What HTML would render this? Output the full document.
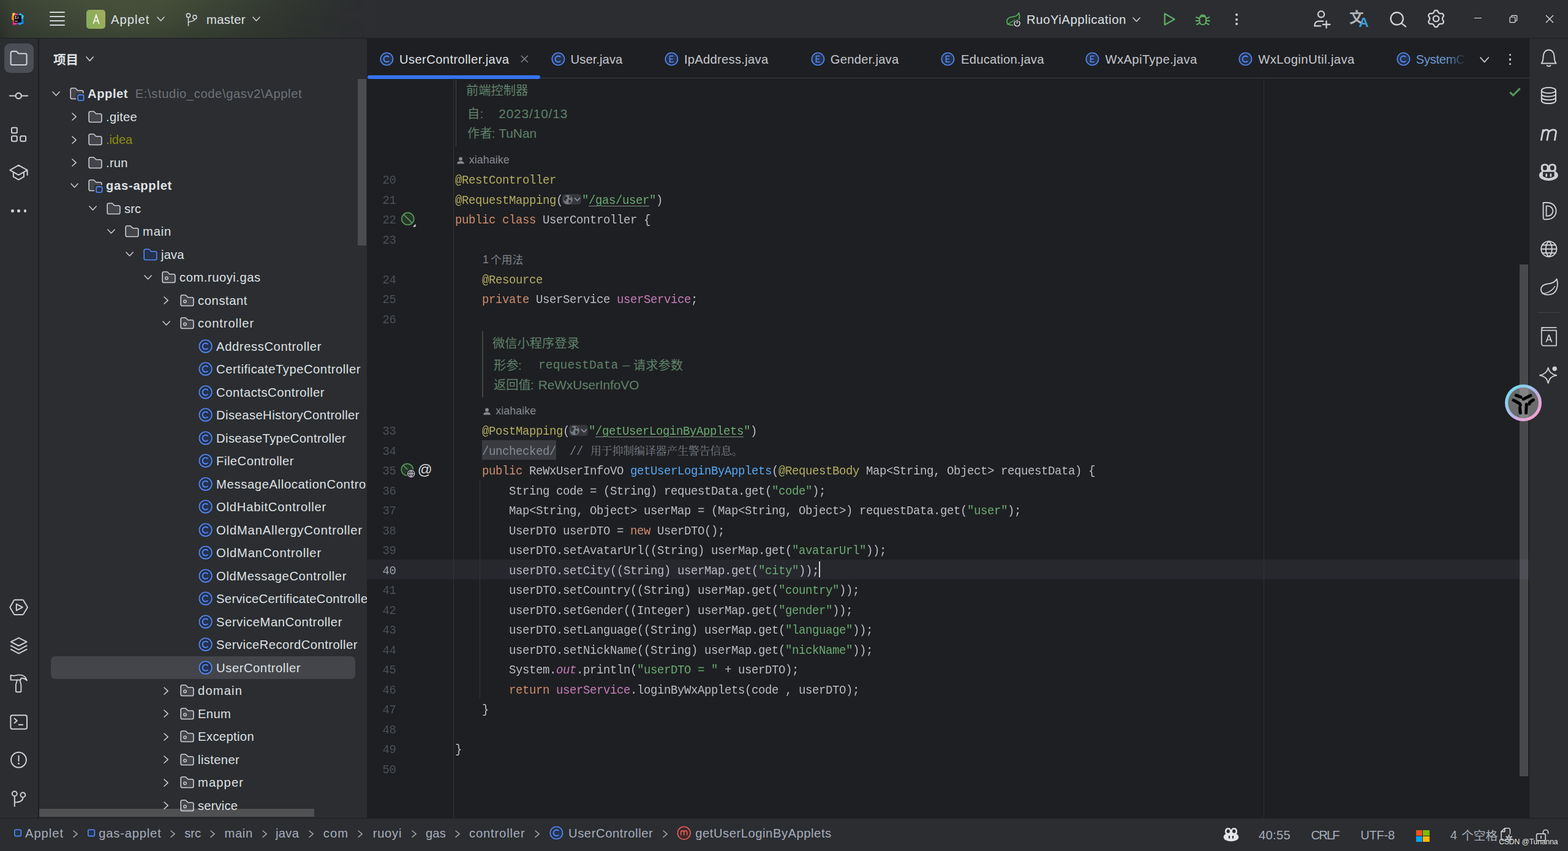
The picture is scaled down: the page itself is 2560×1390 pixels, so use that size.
<!DOCTYPE html>
<html><head><meta charset="utf-8"><title>UserController.java</title>
<style>html,body{margin:0;padding:0;background:#2b2d30;}body{width:2560px;height:1390px;overflow:hidden;position:relative;font-family:"Liberation Sans",sans-serif;}.r,.t,.i,.cj{position:absolute;display:block;}.t{white-space:pre;}.m{font-family:"Liberation Mono",monospace;}.c{transform:scaleY(1.045);transform-origin:0 17.55px;}.i,.cj{overflow:visible;}.cj text{font-family:"Liberation Sans","Noto Sans CJK SC",sans-serif;}</style></head>
<body>
<div class="r" style="left:0.00px;top:0.00px;width:2560.00px;height:1390.00px;background:#2b2d30;"></div>
<div class="r" style="left:0;top:0;width:2560px;height:62px;background:linear-gradient(90deg,#30362f 0px,#383f34 18px,#3d4637 70px,#424b39 140px,#454e3a 200px,#424b38 270px,#3b4335 340px,#343a31 420px,#2f3330 500px,#2c2e30 570px,#2b2d30 620px,#2b2d30 100%);"></div>
<div class="r" style="left:0;top:0;width:600px;height:62px;background:linear-gradient(180deg,rgba(90,105,60,0.10) 0%,rgba(0,0,0,0) 40%,rgba(22,24,26,0.20) 100%);-webkit-mask-image:linear-gradient(90deg,#000 0,#000 55%,transparent 100%);mask-image:linear-gradient(90deg,#000 0,#000 55%,transparent 100%);"></div>
<div class="r" style="left:0.00px;top:62.00px;width:2560.00px;height:1.10px;background:#1e1f22;"></div>
<div class="r" style="left:599.40px;top:63.00px;width:1897.60px;height:1273.50px;background:#1e1f22;"></div>
<div class="r" style="left:62.30px;top:62.00px;width:1.50px;height:1275.00px;background:#1e1f22;"></div>
<div class="r" style="left:598.60px;top:62.00px;width:1.00px;height:1275.00px;background:#1e1f22;"></div>
<div class="r" style="left:2497.00px;top:62.50px;width:63.00px;height:1274.00px;background:#2b2d30;"></div>
<div class="r" style="left:2496.00px;top:62.00px;width:1.00px;height:1275.00px;background:#1e1f22;"></div>
<div class="r" style="left:0.00px;top:1336.00px;width:2560.00px;height:54.00px;background:#2b2d30;"></div>
<div class="r" style="left:0.00px;top:1336.00px;width:2560.00px;height:1.00px;background:#1e1f22;"></div>
<svg class="i" style="left:18.00px;top:20.00px;" width="23" height="22" viewBox="0 0 23 22"><polygon points="2.5,1.5 10,1.8 12,5 5,5 5,16.7 10,17.5 9,20.5 2.7,20.6 3,13 1.2,11 2.3,7" fill="#fc2d8e"/><polygon points="1.3,6.2 5,5 5,14 1.2,12" fill="#fd8a1f"/><polygon points="2.5,1.3 6.6,1 5.6,5.2 2,6.6" fill="#fcd23a"/><polygon points="12,4 14.5,1.2 20.8,5.8 19.8,11 20.8,17.5 14,21 10,18.5 16.8,16.7 16.8,5" fill="#0b7ff2"/><polygon points="14.5,1.2 20.8,5.8 19.6,11 16.8,10 16.8,5 13,4.5" fill="#22c8f7"/><polygon points="10,17.5 16.8,16.7 20.8,17.5 14,21" fill="#1a9df6"/><rect x="5" y="5" width="11.8" height="11.7" fill="#0a0a0c"/><rect x="6.2" y="14.2" width="4.4" height="0.9" fill="#fff"/><path d="M6.3 6.6h2.6M7.6 6.6v3.6M6.3 10.2h2.6M11.6 6.6v2.8a0.9 0.9 0 0 1 -1.8 0" stroke="#fff" stroke-width="0.85" fill="none"/></svg>
<div class="r" style="left:80.90px;top:19.10px;width:24.70px;height:2.00px;background:#d5d7dc;border-radius:1px;"></div>
<div class="r" style="left:80.90px;top:26.00px;width:24.70px;height:2.00px;background:#d5d7dc;border-radius:1px;"></div>
<div class="r" style="left:80.90px;top:33.10px;width:24.70px;height:2.00px;background:#d5d7dc;border-radius:1px;"></div>
<div class="r" style="left:80.90px;top:40.00px;width:24.70px;height:2.00px;background:#d5d7dc;border-radius:1px;"></div>
<div class="r" style="left:141.2px;top:16px;width:30.8px;height:30.9px;border-radius:5px;background:linear-gradient(65deg,#86ab57 0%,#8fae5a 40%,#a3ab5f 100%);"></div>
<svg class="i" style="left:150.00px;top:22.00px;" width="14" height="19" viewBox="0 0 14 19"><path d="M2.3 16.7 L7 2.8 L11.7 16.7 M3.9 12.3 H10.1" fill="none" stroke="#fff" stroke-width="1.6" stroke-linejoin="miter"/></svg>
<span class="t" style="left:181.00px;top:18.77px;font-size:20.30px;line-height:26px;color:#dfe1e5;letter-spacing:0.990px;">Applet</span>
<svg class="i" style="left:255.20px;top:26.30px;" width="15" height="10" viewBox="0 0 15 10"><path d="M2 2 L7.5 8 L13 2" fill="none" stroke="#ced0d6" stroke-width="1.6" stroke-linecap="round" stroke-linejoin="round"/></svg>
<svg class="i" style="left:302.00px;top:20.00px;" width="22" height="24" viewBox="0 0 22 24"><circle cx="5.5" cy="5.2" r="3.1" fill="none" stroke="#ced0d6" stroke-width="1.6"/><circle cx="16" cy="8" r="3.1" fill="none" stroke="#ced0d6" stroke-width="1.6"/><path d="M5.5 8.4V22 M5.5 17.5 C5.5 14 16 16 16 11.2" fill="none" stroke="#ced0d6" stroke-width="1.6" stroke-linecap="round"/></svg>
<span class="t" style="left:337.00px;top:18.77px;font-size:20.30px;line-height:26px;color:#dfe1e5;letter-spacing:0.327px;">master</span>
<svg class="i" style="left:411.10px;top:26.30px;" width="15" height="10" viewBox="0 0 15 10"><path d="M2 2 L7.5 8 L13 2" fill="none" stroke="#ced0d6" stroke-width="1.6" stroke-linecap="round" stroke-linejoin="round"/></svg>
<svg class="i" style="left:1641.00px;top:18.00px;" width="28" height="28" viewBox="0 0 28 28"><path d="M3 18.6 C2 12 7.5 9.6 13 9.4 C17.5 9.2 20.5 7.2 22.4 3 C24.6 9.6 24 20.6 13.5 22.6 C9 23.4 4.6 22.4 3 18.6 Z" fill="#25392a" stroke="#5fad65" stroke-width="1.7" stroke-linejoin="round"/><path d="M3.8 21.8 C8 19.4 12 17 16.4 14.4" fill="none" stroke="#5fad65" stroke-width="1.4" stroke-linecap="round"/><circle cx="19.6" cy="20.2" r="6.6" fill="#2b2d30"/><path d="M19.6 15.2v4.6 M16.6 16.9a4.5 4.5 0 1 0 6 0" fill="none" stroke="#ced0d6" stroke-width="1.7" stroke-linecap="round"/></svg>
<span class="t" style="left:1676.00px;top:18.77px;font-size:20.30px;line-height:26px;color:#dfe1e5;letter-spacing:0.572px;">RuoYiApplication</span>
<svg class="i" style="left:1847.50px;top:27.20px;" width="15" height="10" viewBox="0 0 15 10"><path d="M2 2 L7.5 8 L13 2" fill="none" stroke="#ced0d6" stroke-width="1.6" stroke-linecap="round" stroke-linejoin="round"/></svg>
<svg class="i" style="left:1896.00px;top:18.00px;" width="26" height="26" viewBox="0 0 26 26"><path d="M5.6 4.3 L21.6 13.4 L5.6 22.5 Z" fill="none" stroke="#5fad65" stroke-width="2.3" stroke-linejoin="round"/></svg>
<svg class="i" style="left:1950.00px;top:17.00px;" width="28" height="28" viewBox="0 0 28 28"><g fill="none" stroke="#5fad65" stroke-width="2.1" stroke-linecap="round"><path d="M8.4 13.2 C8.4 10.6 10.8 9.6 13.7 9.6 C16.6 9.6 19 10.6 19 13.2 V17.2 C19 20.8 16.6 23.2 13.7 23.2 C10.8 23.2 8.4 20.8 8.4 17.2 Z"/><path d="M10 10 C10 6.6 17.4 6.6 17.4 10"/><path d="M8.2 13.4L3.2 11.2 M19.2 13.4L24.2 11.2 M8.2 17H2.6 M19.2 17H24.8 M9 20.4L4 23 M18.4 20.4L23.4 23"/></g></svg>
<div class="r" style="left:2016.50px;top:21.80px;width:4.00px;height:4.00px;background:#ced0d6;border-radius:50%;"></div>
<div class="r" style="left:2016.50px;top:29.50px;width:4.00px;height:4.00px;background:#ced0d6;border-radius:50%;"></div>
<div class="r" style="left:2016.50px;top:37.30px;width:4.00px;height:4.00px;background:#ced0d6;border-radius:50%;"></div>
<svg class="i" style="left:2142.00px;top:15.00px;" width="32" height="32" viewBox="0 0 32 32"><g fill="none" stroke="#ced0d6" stroke-width="2.3" stroke-linecap="round"><circle cx="15" cy="8.3" r="5.1"/><path d="M18.2 19.6H11.4 C7 19.6 4.4 22.6 4.4 26.6 V27.4 H14.2"/><path d="M23.5 19.4V30.6 M17.8 25H29.4"/></g></svg>
<svg class="cj " style="left:2203.40px;top:13.80px" width="23.50" height="30.55" viewBox="0 -23.50 23.50 30.55" fill="#b1b3b9"><text x="0" y="0" font-size="23.5" font-weight="700">文</text></svg>
<span class="t" style="left:2218.20px;top:20.90px;font-size:22.80px;line-height:30px;color:#389fd6;font-weight:700;">A</span>
<svg class="i" style="left:2266.00px;top:15.00px;" width="32" height="32" viewBox="0 0 32 32"><g fill="none" stroke="#ced0d6" stroke-width="2.4" stroke-linecap="round"><circle cx="14.7" cy="15.4" r="10.1"/><path d="M22 22.9L29 28.4"/></g></svg>
<svg class="i" style="left:2328.00px;top:14.00px;" width="34" height="34" viewBox="0 0 34 34"><path d="M27.05 16.50 L27.03 17.18 L27.03 17.87 L27.58 18.68 L28.19 19.61 L28.72 20.61 L29.05 21.66 L28.75 22.49 L28.33 23.27 L27.87 24.03 L27.29 24.71 L26.22 24.94 L25.09 24.99 L23.98 24.92 L23.00 24.85 L22.41 25.19 L21.83 25.55 L21.22 25.87 L20.63 26.22 L20.20 27.10 L19.71 28.09 L19.10 29.05 L18.36 29.86 L17.49 30.02 L16.60 30.05 L15.71 30.02 L14.84 29.86 L14.10 29.05 L13.49 28.09 L13.00 27.10 L12.57 26.22 L11.98 25.87 L11.38 25.55 L10.79 25.19 L10.20 24.85 L9.22 24.92 L8.11 24.99 L6.98 24.94 L5.91 24.71 L5.33 24.03 L4.87 23.27 L4.45 22.49 L4.15 21.66 L4.48 20.61 L5.01 19.61 L5.62 18.68 L6.17 17.87 L6.17 17.18 L6.15 16.50 L6.17 15.82 L6.17 15.13 L5.62 14.32 L5.01 13.39 L4.48 12.39 L4.15 11.34 L4.45 10.51 L4.87 9.73 L5.33 8.97 L5.91 8.29 L6.98 8.06 L8.11 8.01 L9.22 8.08 L10.20 8.15 L10.79 7.81 L11.37 7.45 L11.98 7.13 L12.57 6.78 L13.00 5.90 L13.49 4.91 L14.10 3.95 L14.84 3.14 L15.71 2.98 L16.60 2.95 L17.49 2.98 L18.36 3.14 L19.10 3.95 L19.71 4.91 L20.20 5.90 L20.63 6.78 L21.22 7.13 L21.83 7.45 L22.41 7.81 L23.00 8.15 L23.98 8.08 L25.09 8.01 L26.22 8.06 L27.29 8.29 L27.87 8.97 L28.33 9.72 L28.75 10.51 L29.05 11.34 L28.72 12.39 L28.19 13.39 L27.58 14.32 L27.03 15.13 L27.03 15.82 Z" fill="none" stroke="#ced0d6" stroke-width="2.3" stroke-linejoin="round"/><circle cx="16.6" cy="16.5" r="4.7" fill="none" stroke="#ced0d6" stroke-width="2.3"/></svg>
<div class="r" style="left:2407.00px;top:28.60px;width:12.20px;height:1.30px;background:#e4e5e8;"></div>
<svg class="i" style="left:2464.00px;top:24.00px;" width="14" height="14" viewBox="0 0 14 14"><g fill="none" stroke="#e4e5e8" stroke-width="1.2"><rect x="1.1" y="4" width="8.6" height="8.6" rx="0.8"/><path d="M3.8 4V2.2 A0.8 0.8 0 0 1 4.6 1.4 H11.8 A0.8 0.8 0 0 1 12.6 2.2 V9.2 A0.8 0.8 0 0 1 11.8 10 H9.8"/></g></svg>
<svg class="i" style="left:2523.00px;top:24.00px;" width="14" height="14" viewBox="0 0 14 14"><path d="M1 1L13 13M13 1L1 13" stroke="#e4e5e8" stroke-width="1.25" fill="none"/></svg>
<div class="r" style="left:7.10px;top:71.00px;width:48.00px;height:47.60px;background:#4b4e55;border-radius:9.5px;"></div>
<svg class="i" style="left:0.00px;top:64.00px;" width="64" height="64" viewBox="0 0 64 64"><g fill="none" stroke="#ced0d6" stroke-width="2.1" stroke-linecap="round" stroke-linejoin="round"><path d="M17.6 22.5 a2.6 2.6 0 0 1 2.6 -2.6 h6.6 l3.6 3.6 h10.6 a2.6 2.6 0 0 1 2.6 2.6 v13.3 a2.6 2.6 0 0 1 -2.6 2.6 h-20.8 a2.6 2.6 0 0 1 -2.6 -2.6 z"/></g></svg>
<svg class="i" style="left:0.00px;top:125.00px;" width="64" height="64" viewBox="0 0 64 64"><g fill="none" stroke="#ced0d6" stroke-width="2.1" stroke-linecap="round" stroke-linejoin="round"><circle cx="30.3" cy="31.5" r="4.6"/><path d="M15.8 31.5H25.5 M35.2 31.5H45.2"/></g></svg>
<svg class="i" style="left:0.00px;top:188.00px;" width="64" height="64" viewBox="0 0 64 64"><g fill="none" stroke="#ced0d6" stroke-width="2" stroke-linecap="round" stroke-linejoin="round"><rect x="19" y="20.4" width="8.8" height="8.8" rx="1.8"/><rect x="19" y="34.2" width="8.8" height="8.6" rx="1.8"/><rect x="33.3" y="34.2" width="8.8" height="8.6" rx="1.8"/></g></svg>
<svg class="i" style="left:0.00px;top:250.00px;" width="64" height="64" viewBox="0 0 64 64"><g fill="none" stroke="#ced0d6" stroke-width="2" stroke-linecap="round" stroke-linejoin="round"><path d="M30.3 19.8 L16.3 27.8 L30.3 35.8 L44.6 27.8 Z M21.8 31.2 V38.7 L30.3 43.6 L39 38.7 V31.2 M44.6 28 V36"/></g></svg>
<div class="r" style="left:18.20px;top:342.20px;width:4.40px;height:4.40px;background:#ced0d6;border-radius:50%;"></div>
<div class="r" style="left:28.40px;top:342.20px;width:4.40px;height:4.40px;background:#ced0d6;border-radius:50%;"></div>
<div class="r" style="left:38.60px;top:342.20px;width:4.40px;height:4.40px;background:#ced0d6;border-radius:50%;"></div>
<svg class="i" style="left:0.00px;top:960.00px;" width="64" height="64" viewBox="0 0 64 64"><g fill="none" stroke="#ced0d6" stroke-width="2" stroke-linecap="round" stroke-linejoin="round"><path d="M16.3 31.9 L22.7 20.8 a2 2 0 0 1 1.7 -1 h12.2 a2 2 0 0 1 1.7 1 L45 31.9 L38.3 43 a2 2 0 0 1 -1.7 1 h-12.2 a2 2 0 0 1 -1.7 -1 Z"/><path d="M26.8 26.6 V37.2 L36.8 31.9 Z"/></g></svg>
<svg class="i" style="left:0.00px;top:1022.00px;" width="64" height="64" viewBox="0 0 64 64"><g fill="none" stroke="#ced0d6" stroke-width="2" stroke-linecap="round" stroke-linejoin="round"><path d="M30.6 19.8 L17.8 26.4 L30.6 33 L43.6 26.4 Z M17.8 32.6 L30.6 39.4 L43.6 32.6 M17.8 38.6 L30.6 45.4 L43.6 38.6"/></g></svg>
<svg class="i" style="left:0.00px;top:1085.00px;" width="64" height="64" viewBox="0 0 64 64"><g fill="none" stroke="#ced0d6" stroke-width="1.9" stroke-linecap="round" stroke-linejoin="round"><path d="M17.5 18 C20 17.7 21.6 19.1 23.8 18.6 C26.2 18 28.2 17.4 31 17.4 C38 17.4 42.6 21 44 26.6 C41.4 24 38.8 22.7 35.8 22.7 C34.4 22.7 33.7 23.6 33.5 25.6 L17.5 25.6 Z"/><path d="M27.7 25.8 L27.5 27.2 C27.5 30.2 25.9 31 25.9 34 L25.9 44 a1.3 1.3 0 0 0 1.3 1.3 h5.9 a1.3 1.3 0 0 0 1.3 -1.3 L34.4 34 C34.4 31 32.8 30.2 32.8 27.2 L32.6 25.8"/></g></svg>
<svg class="i" style="left:0.00px;top:1148.00px;" width="64" height="64" viewBox="0 0 64 64"><g fill="none" stroke="#ced0d6" stroke-width="2" stroke-linecap="round" stroke-linejoin="round"><rect x="17.4" y="20.2" width="26.6" height="22.6" rx="2.8"/><path d="M23.6 25.6 L27.8 29.2 L23.6 32.8 M30.6 35.8 H37.2"/></g></svg>
<svg class="i" style="left:0.00px;top:1210.00px;" width="64" height="64" viewBox="0 0 64 64"><g fill="none" stroke="#ced0d6" stroke-width="2" stroke-linecap="round" stroke-linejoin="round"><circle cx="30.5" cy="31.2" r="12.4"/><path d="M30.5 24.4 V33"/></g><circle cx="30.5" cy="37.2" r="1.4" fill="#ced0d6"/></svg>
<svg class="i" style="left:0.00px;top:1272.00px;" width="64" height="64" viewBox="0 0 64 64"><g fill="none" stroke="#ced0d6" stroke-width="2" stroke-linecap="round" stroke-linejoin="round"><circle cx="23.8" cy="24.4" r="3.9"/><circle cx="37.4" cy="26.4" r="3.9"/><path d="M23.8 28.4 V45 M23.8 38.4 C30 38.4 37.4 37.4 37.4 30.4"/></g></svg>
<svg class="cj " style="left:87.20px;top:83.70px" width="41.20" height="26.78" viewBox="0 -20.60 41.20 26.78" fill="#dfe1e5"><text x="0" y="0" font-size="20.6" font-weight="700">项目</text></svg>
<svg class="i" style="left:139.10px;top:91.40px;" width="15.2" height="10.4" viewBox="0 0 15.2 10.4"><path d="M2 2 L7.6 8.4 L13.2 2" fill="none" stroke="#ced0d6" stroke-width="1.6" stroke-linecap="round" stroke-linejoin="round"/></svg>
<div class="r" style="left:64px;top:128px;width:535px;height:1208px;overflow:hidden;">
<div class="r" style="left:19.00px;top:944.00px;width:497.00px;height:36.50px;background:#43454a;border-radius:7px;"></div>
<svg class="i" style="left:19.90px;top:19.50px;" width="15.2" height="10" viewBox="0 0 15.2 10"><path d="M2 2 L7.6 8 L13.2 2" fill="none" stroke="#ced0d6" stroke-width="1.5" stroke-linecap="round" stroke-linejoin="round"/></svg>
<svg class="i" style="left:49.50px;top:15.25px;" width="26" height="24" viewBox="0 0 26 24"><path d="M1.2 3.2 a2.2 2.2 0 0 1 2.2 -2.2 h5 a2 2 0 0 1 1.5 .7 l3 3.1 h6.8 a2.2 2.2 0 0 1 2.2 2.2 v9.3 a2.2 2.2 0 0 1 -2.2 2.2 h-16.3 a2.2 2.2 0 0 1 -2.2 -2.2 z" fill="#43454a" stroke="#ced0d6" stroke-width="1.6" stroke-linejoin="round"/><rect x="10.2" y="9.2" width="15" height="14" fill="#2b2d30"/><rect x="13.1" y="11.9" width="9.6" height="9.4" rx="2.2" fill="#25324d" stroke="#548af7" stroke-width="1.6"/></svg>
<span class="t" style="left:79.10px;top:12.10px;font-size:20.20px;line-height:26px;color:#dfe1e5;letter-spacing:0.527px;font-weight:700;">Applet</span>
<span class="t" style="left:156.80px;top:12.10px;font-size:20.20px;line-height:26px;color:#6f737a;letter-spacing:0.613px;">E:\studio_code\gasv2\Applet</span>
<svg class="i" style="left:52.10px;top:55.20px;" width="10.2" height="15.2" viewBox="0 0 10.2 15.2"><path d="M2 2 L8.2 7.6 L2 13.2" fill="none" stroke="#ced0d6" stroke-width="1.5" stroke-linecap="round" stroke-linejoin="round"/></svg>
<svg class="i" style="left:79.50px;top:52.75px;" width="23" height="20" viewBox="0 0 23 20"><path d="M1.2 3.2 a2.2 2.2 0 0 1 2.2 -2.2 h5 a2 2 0 0 1 1.5 .7 l3 3.1 h6.8 a2.2 2.2 0 0 1 2.2 2.2 v9.3 a2.2 2.2 0 0 1 -2.2 2.2 h-16.3 a2.2 2.2 0 0 1 -2.2 -2.2 z" fill="#43454a" stroke="#ced0d6" stroke-width="1.6" stroke-linejoin="round"/></svg>
<span class="t" style="left:109.10px;top:49.60px;font-size:20.20px;line-height:26px;color:#dfe1e5;letter-spacing:0.264px;">.gitee</span>
<svg class="i" style="left:52.10px;top:92.70px;" width="10.2" height="15.2" viewBox="0 0 10.2 15.2"><path d="M2 2 L8.2 7.6 L2 13.2" fill="none" stroke="#ced0d6" stroke-width="1.5" stroke-linecap="round" stroke-linejoin="round"/></svg>
<svg class="i" style="left:79.50px;top:90.25px;" width="23" height="20" viewBox="0 0 23 20"><path d="M1.2 3.2 a2.2 2.2 0 0 1 2.2 -2.2 h5 a2 2 0 0 1 1.5 .7 l3 3.1 h6.8 a2.2 2.2 0 0 1 2.2 2.2 v9.3 a2.2 2.2 0 0 1 -2.2 2.2 h-16.3 a2.2 2.2 0 0 1 -2.2 -2.2 z" fill="#43454a" stroke="#ced0d6" stroke-width="1.6" stroke-linejoin="round"/></svg>
<span class="t" style="left:109.10px;top:87.10px;font-size:20.20px;line-height:26px;color:#8a8c12;letter-spacing:-0.161px;">.idea</span>
<svg class="i" style="left:52.10px;top:130.20px;" width="10.2" height="15.2" viewBox="0 0 10.2 15.2"><path d="M2 2 L8.2 7.6 L2 13.2" fill="none" stroke="#ced0d6" stroke-width="1.5" stroke-linecap="round" stroke-linejoin="round"/></svg>
<svg class="i" style="left:79.50px;top:127.75px;" width="23" height="20" viewBox="0 0 23 20"><path d="M1.2 3.2 a2.2 2.2 0 0 1 2.2 -2.2 h5 a2 2 0 0 1 1.5 .7 l3 3.1 h6.8 a2.2 2.2 0 0 1 2.2 2.2 v9.3 a2.2 2.2 0 0 1 -2.2 2.2 h-16.3 a2.2 2.2 0 0 1 -2.2 -2.2 z" fill="#43454a" stroke="#ced0d6" stroke-width="1.6" stroke-linejoin="round"/></svg>
<span class="t" style="left:109.10px;top:124.60px;font-size:20.20px;line-height:26px;color:#dfe1e5;letter-spacing:0.173px;">.run</span>
<svg class="i" style="left:49.90px;top:169.50px;" width="15.2" height="10" viewBox="0 0 15.2 10"><path d="M2 2 L7.6 8 L13.2 2" fill="none" stroke="#ced0d6" stroke-width="1.5" stroke-linecap="round" stroke-linejoin="round"/></svg>
<svg class="i" style="left:79.50px;top:165.25px;" width="26" height="24" viewBox="0 0 26 24"><path d="M1.2 3.2 a2.2 2.2 0 0 1 2.2 -2.2 h5 a2 2 0 0 1 1.5 .7 l3 3.1 h6.8 a2.2 2.2 0 0 1 2.2 2.2 v9.3 a2.2 2.2 0 0 1 -2.2 2.2 h-16.3 a2.2 2.2 0 0 1 -2.2 -2.2 z" fill="#43454a" stroke="#ced0d6" stroke-width="1.6" stroke-linejoin="round"/><rect x="10.2" y="9.2" width="15" height="14" fill="#2b2d30"/><rect x="13.1" y="11.9" width="9.6" height="9.4" rx="2.2" fill="#25324d" stroke="#548af7" stroke-width="1.6"/></svg>
<span class="t" style="left:109.10px;top:162.10px;font-size:20.20px;line-height:26px;color:#dfe1e5;letter-spacing:0.698px;font-weight:700;">gas-applet</span>
<svg class="i" style="left:79.90px;top:207.00px;" width="15.2" height="10" viewBox="0 0 15.2 10"><path d="M2 2 L7.6 8 L13.2 2" fill="none" stroke="#ced0d6" stroke-width="1.5" stroke-linecap="round" stroke-linejoin="round"/></svg>
<svg class="i" style="left:109.50px;top:202.75px;" width="23" height="20" viewBox="0 0 23 20"><path d="M1.2 3.2 a2.2 2.2 0 0 1 2.2 -2.2 h5 a2 2 0 0 1 1.5 .7 l3 3.1 h6.8 a2.2 2.2 0 0 1 2.2 2.2 v9.3 a2.2 2.2 0 0 1 -2.2 2.2 h-16.3 a2.2 2.2 0 0 1 -2.2 -2.2 z" fill="#43454a" stroke="#ced0d6" stroke-width="1.6" stroke-linejoin="round"/></svg>
<span class="t" style="left:139.10px;top:199.60px;font-size:20.20px;line-height:26px;color:#dfe1e5;letter-spacing:0.024px;">src</span>
<svg class="i" style="left:109.90px;top:244.50px;" width="15.2" height="10" viewBox="0 0 15.2 10"><path d="M2 2 L7.6 8 L13.2 2" fill="none" stroke="#ced0d6" stroke-width="1.5" stroke-linecap="round" stroke-linejoin="round"/></svg>
<svg class="i" style="left:139.50px;top:240.25px;" width="23" height="20" viewBox="0 0 23 20"><path d="M1.2 3.2 a2.2 2.2 0 0 1 2.2 -2.2 h5 a2 2 0 0 1 1.5 .7 l3 3.1 h6.8 a2.2 2.2 0 0 1 2.2 2.2 v9.3 a2.2 2.2 0 0 1 -2.2 2.2 h-16.3 a2.2 2.2 0 0 1 -2.2 -2.2 z" fill="#43454a" stroke="#ced0d6" stroke-width="1.6" stroke-linejoin="round"/></svg>
<span class="t" style="left:169.10px;top:237.10px;font-size:20.20px;line-height:26px;color:#dfe1e5;letter-spacing:0.804px;">main</span>
<svg class="i" style="left:139.90px;top:282.00px;" width="15.2" height="10" viewBox="0 0 15.2 10"><path d="M2 2 L7.6 8 L13.2 2" fill="none" stroke="#ced0d6" stroke-width="1.5" stroke-linecap="round" stroke-linejoin="round"/></svg>
<svg class="i" style="left:169.50px;top:277.75px;" width="23" height="20" viewBox="0 0 23 20"><path d="M1.2 3.2 a2.2 2.2 0 0 1 2.2 -2.2 h5 a2 2 0 0 1 1.5 .7 l3 3.1 h6.8 a2.2 2.2 0 0 1 2.2 2.2 v9.3 a2.2 2.2 0 0 1 -2.2 2.2 h-16.3 a2.2 2.2 0 0 1 -2.2 -2.2 z" fill="#25324d" stroke="#548af7" stroke-width="1.6" stroke-linejoin="round"/></svg>
<span class="t" style="left:199.10px;top:274.60px;font-size:20.20px;line-height:26px;color:#dfe1e5;letter-spacing:0.111px;">java</span>
<svg class="i" style="left:169.90px;top:319.50px;" width="15.2" height="10" viewBox="0 0 15.2 10"><path d="M2 2 L7.6 8 L13.2 2" fill="none" stroke="#ced0d6" stroke-width="1.5" stroke-linecap="round" stroke-linejoin="round"/></svg>
<svg class="i" style="left:199.50px;top:315.25px;" width="23" height="20" viewBox="0 0 23 20"><path d="M1.2 3.2 a2.2 2.2 0 0 1 2.2 -2.2 h5 a2 2 0 0 1 1.5 .7 l3 3.1 h6.8 a2.2 2.2 0 0 1 2.2 2.2 v9.3 a2.2 2.2 0 0 1 -2.2 2.2 h-16.3 a2.2 2.2 0 0 1 -2.2 -2.2 z" fill="#43454a" stroke="#ced0d6" stroke-width="1.6" stroke-linejoin="round"/><circle cx="8" cy="11.3" r="2.2" fill="none" stroke="#ced0d6" stroke-width="1.4"/></svg>
<span class="t" style="left:229.10px;top:312.10px;font-size:20.20px;line-height:26px;color:#dfe1e5;letter-spacing:0.528px;">com.ruoyi.gas</span>
<svg class="i" style="left:202.10px;top:355.20px;" width="10.2" height="15.2" viewBox="0 0 10.2 15.2"><path d="M2 2 L8.2 7.6 L2 13.2" fill="none" stroke="#ced0d6" stroke-width="1.5" stroke-linecap="round" stroke-linejoin="round"/></svg>
<svg class="i" style="left:229.50px;top:352.75px;" width="23" height="20" viewBox="0 0 23 20"><path d="M1.2 3.2 a2.2 2.2 0 0 1 2.2 -2.2 h5 a2 2 0 0 1 1.5 .7 l3 3.1 h6.8 a2.2 2.2 0 0 1 2.2 2.2 v9.3 a2.2 2.2 0 0 1 -2.2 2.2 h-16.3 a2.2 2.2 0 0 1 -2.2 -2.2 z" fill="#43454a" stroke="#ced0d6" stroke-width="1.6" stroke-linejoin="round"/><circle cx="8" cy="11.3" r="2.2" fill="none" stroke="#ced0d6" stroke-width="1.4"/></svg>
<span class="t" style="left:259.10px;top:349.60px;font-size:20.20px;line-height:26px;color:#dfe1e5;letter-spacing:0.580px;">constant</span>
<svg class="i" style="left:199.90px;top:394.50px;" width="15.2" height="10" viewBox="0 0 15.2 10"><path d="M2 2 L7.6 8 L13.2 2" fill="none" stroke="#ced0d6" stroke-width="1.5" stroke-linecap="round" stroke-linejoin="round"/></svg>
<svg class="i" style="left:229.50px;top:390.25px;" width="23" height="20" viewBox="0 0 23 20"><path d="M1.2 3.2 a2.2 2.2 0 0 1 2.2 -2.2 h5 a2 2 0 0 1 1.5 .7 l3 3.1 h6.8 a2.2 2.2 0 0 1 2.2 2.2 v9.3 a2.2 2.2 0 0 1 -2.2 2.2 h-16.3 a2.2 2.2 0 0 1 -2.2 -2.2 z" fill="#43454a" stroke="#ced0d6" stroke-width="1.6" stroke-linejoin="round"/><circle cx="8" cy="11.3" r="2.2" fill="none" stroke="#ced0d6" stroke-width="1.4"/></svg>
<span class="t" style="left:259.10px;top:387.10px;font-size:20.20px;line-height:26px;color:#dfe1e5;letter-spacing:0.892px;">controller</span>
<svg class="i" style="left:259.70px;top:425.60px;" width="23.2" height="23.2" viewBox="0 0 23.2 23.2"><circle cx="11.6" cy="11.6" r="10.3" fill="#25324d" stroke="#548af7" stroke-width="1.6"/><path d="M15.44 8.41 a4.98 4.98 0 1 0 0 6.38" fill="none" stroke="#548af7" stroke-width="1.85"/></svg>
<span class="t" style="left:289.10px;top:424.60px;font-size:20.20px;line-height:26px;color:#dfe1e5;letter-spacing:0.608px;">AddressController</span>
<svg class="i" style="left:259.70px;top:463.10px;" width="23.2" height="23.2" viewBox="0 0 23.2 23.2"><circle cx="11.6" cy="11.6" r="10.3" fill="#25324d" stroke="#548af7" stroke-width="1.6"/><path d="M15.44 8.41 a4.98 4.98 0 1 0 0 6.38" fill="none" stroke="#548af7" stroke-width="1.85"/></svg>
<span class="t" style="left:289.10px;top:462.10px;font-size:20.20px;line-height:26px;color:#dfe1e5;letter-spacing:0.548px;">CertificateTypeController</span>
<svg class="i" style="left:259.70px;top:500.60px;" width="23.2" height="23.2" viewBox="0 0 23.2 23.2"><circle cx="11.6" cy="11.6" r="10.3" fill="#25324d" stroke="#548af7" stroke-width="1.6"/><path d="M15.44 8.41 a4.98 4.98 0 1 0 0 6.38" fill="none" stroke="#548af7" stroke-width="1.85"/></svg>
<span class="t" style="left:289.10px;top:499.60px;font-size:20.20px;line-height:26px;color:#dfe1e5;letter-spacing:0.540px;">ContactsController</span>
<svg class="i" style="left:259.70px;top:538.10px;" width="23.2" height="23.2" viewBox="0 0 23.2 23.2"><circle cx="11.6" cy="11.6" r="10.3" fill="#25324d" stroke="#548af7" stroke-width="1.6"/><path d="M15.44 8.41 a4.98 4.98 0 1 0 0 6.38" fill="none" stroke="#548af7" stroke-width="1.85"/></svg>
<span class="t" style="left:289.10px;top:537.10px;font-size:20.20px;line-height:26px;color:#dfe1e5;letter-spacing:0.442px;">DiseaseHistoryController</span>
<svg class="i" style="left:259.70px;top:575.60px;" width="23.2" height="23.2" viewBox="0 0 23.2 23.2"><circle cx="11.6" cy="11.6" r="10.3" fill="#25324d" stroke="#548af7" stroke-width="1.6"/><path d="M15.44 8.41 a4.98 4.98 0 1 0 0 6.38" fill="none" stroke="#548af7" stroke-width="1.85"/></svg>
<span class="t" style="left:289.10px;top:574.60px;font-size:20.20px;line-height:26px;color:#dfe1e5;letter-spacing:0.365px;">DiseaseTypeController</span>
<svg class="i" style="left:259.70px;top:613.10px;" width="23.2" height="23.2" viewBox="0 0 23.2 23.2"><circle cx="11.6" cy="11.6" r="10.3" fill="#25324d" stroke="#548af7" stroke-width="1.6"/><path d="M15.44 8.41 a4.98 4.98 0 1 0 0 6.38" fill="none" stroke="#548af7" stroke-width="1.85"/></svg>
<span class="t" style="left:289.10px;top:612.10px;font-size:20.20px;line-height:26px;color:#dfe1e5;letter-spacing:0.492px;">FileController</span>
<svg class="i" style="left:259.70px;top:650.60px;" width="23.2" height="23.2" viewBox="0 0 23.2 23.2"><circle cx="11.6" cy="11.6" r="10.3" fill="#25324d" stroke="#548af7" stroke-width="1.6"/><path d="M15.44 8.41 a4.98 4.98 0 1 0 0 6.38" fill="none" stroke="#548af7" stroke-width="1.85"/></svg>
<span class="t" style="left:289.10px;top:649.60px;font-size:20.20px;line-height:26px;color:#dfe1e5;letter-spacing:0.644px;">MessageAllocationController</span>
<svg class="i" style="left:259.70px;top:688.10px;" width="23.2" height="23.2" viewBox="0 0 23.2 23.2"><circle cx="11.6" cy="11.6" r="10.3" fill="#25324d" stroke="#548af7" stroke-width="1.6"/><path d="M15.44 8.41 a4.98 4.98 0 1 0 0 6.38" fill="none" stroke="#548af7" stroke-width="1.85"/></svg>
<span class="t" style="left:289.10px;top:687.10px;font-size:20.20px;line-height:26px;color:#dfe1e5;letter-spacing:0.769px;">OldHabitController</span>
<svg class="i" style="left:259.70px;top:725.60px;" width="23.2" height="23.2" viewBox="0 0 23.2 23.2"><circle cx="11.6" cy="11.6" r="10.3" fill="#25324d" stroke="#548af7" stroke-width="1.6"/><path d="M15.44 8.41 a4.98 4.98 0 1 0 0 6.38" fill="none" stroke="#548af7" stroke-width="1.85"/></svg>
<span class="t" style="left:289.10px;top:724.60px;font-size:20.20px;line-height:26px;color:#dfe1e5;letter-spacing:0.824px;">OldManAllergyController</span>
<svg class="i" style="left:259.70px;top:763.10px;" width="23.2" height="23.2" viewBox="0 0 23.2 23.2"><circle cx="11.6" cy="11.6" r="10.3" fill="#25324d" stroke="#548af7" stroke-width="1.6"/><path d="M15.44 8.41 a4.98 4.98 0 1 0 0 6.38" fill="none" stroke="#548af7" stroke-width="1.85"/></svg>
<span class="t" style="left:289.10px;top:762.10px;font-size:20.20px;line-height:26px;color:#dfe1e5;letter-spacing:0.856px;">OldManController</span>
<svg class="i" style="left:259.70px;top:800.60px;" width="23.2" height="23.2" viewBox="0 0 23.2 23.2"><circle cx="11.6" cy="11.6" r="10.3" fill="#25324d" stroke="#548af7" stroke-width="1.6"/><path d="M15.44 8.41 a4.98 4.98 0 1 0 0 6.38" fill="none" stroke="#548af7" stroke-width="1.85"/></svg>
<span class="t" style="left:289.10px;top:799.60px;font-size:20.20px;line-height:26px;color:#dfe1e5;letter-spacing:0.602px;">OldMessageController</span>
<svg class="i" style="left:259.70px;top:838.10px;" width="23.2" height="23.2" viewBox="0 0 23.2 23.2"><circle cx="11.6" cy="11.6" r="10.3" fill="#25324d" stroke="#548af7" stroke-width="1.6"/><path d="M15.44 8.41 a4.98 4.98 0 1 0 0 6.38" fill="none" stroke="#548af7" stroke-width="1.85"/></svg>
<span class="t" style="left:289.10px;top:837.10px;font-size:20.20px;line-height:26px;color:#dfe1e5;letter-spacing:0.309px;">ServiceCertificateController</span>
<svg class="i" style="left:259.70px;top:875.60px;" width="23.2" height="23.2" viewBox="0 0 23.2 23.2"><circle cx="11.6" cy="11.6" r="10.3" fill="#25324d" stroke="#548af7" stroke-width="1.6"/><path d="M15.44 8.41 a4.98 4.98 0 1 0 0 6.38" fill="none" stroke="#548af7" stroke-width="1.85"/></svg>
<span class="t" style="left:289.10px;top:874.60px;font-size:20.20px;line-height:26px;color:#dfe1e5;letter-spacing:0.589px;">ServiceManController</span>
<svg class="i" style="left:259.70px;top:913.10px;" width="23.2" height="23.2" viewBox="0 0 23.2 23.2"><circle cx="11.6" cy="11.6" r="10.3" fill="#25324d" stroke="#548af7" stroke-width="1.6"/><path d="M15.44 8.41 a4.98 4.98 0 1 0 0 6.38" fill="none" stroke="#548af7" stroke-width="1.85"/></svg>
<span class="t" style="left:289.10px;top:912.10px;font-size:20.20px;line-height:26px;color:#dfe1e5;letter-spacing:0.476px;">ServiceRecordController</span>
<svg class="i" style="left:259.70px;top:950.60px;" width="23.2" height="23.2" viewBox="0 0 23.2 23.2"><circle cx="11.6" cy="11.6" r="10.3" fill="#25324d" stroke="#548af7" stroke-width="1.6"/><path d="M15.44 8.41 a4.98 4.98 0 1 0 0 6.38" fill="none" stroke="#548af7" stroke-width="1.85"/></svg>
<span class="t" style="left:289.10px;top:949.60px;font-size:20.20px;line-height:26px;color:#dfe1e5;letter-spacing:0.556px;">UserController</span>
<svg class="i" style="left:202.10px;top:992.70px;" width="10.2" height="15.2" viewBox="0 0 10.2 15.2"><path d="M2 2 L8.2 7.6 L2 13.2" fill="none" stroke="#ced0d6" stroke-width="1.5" stroke-linecap="round" stroke-linejoin="round"/></svg>
<svg class="i" style="left:229.50px;top:990.25px;" width="23" height="20" viewBox="0 0 23 20"><path d="M1.2 3.2 a2.2 2.2 0 0 1 2.2 -2.2 h5 a2 2 0 0 1 1.5 .7 l3 3.1 h6.8 a2.2 2.2 0 0 1 2.2 2.2 v9.3 a2.2 2.2 0 0 1 -2.2 2.2 h-16.3 a2.2 2.2 0 0 1 -2.2 -2.2 z" fill="#43454a" stroke="#ced0d6" stroke-width="1.6" stroke-linejoin="round"/><circle cx="8" cy="11.3" r="2.2" fill="none" stroke="#ced0d6" stroke-width="1.4"/></svg>
<span class="t" style="left:259.10px;top:987.10px;font-size:20.20px;line-height:26px;color:#dfe1e5;letter-spacing:1.125px;">domain</span>
<svg class="i" style="left:202.10px;top:1030.20px;" width="10.2" height="15.2" viewBox="0 0 10.2 15.2"><path d="M2 2 L8.2 7.6 L2 13.2" fill="none" stroke="#ced0d6" stroke-width="1.5" stroke-linecap="round" stroke-linejoin="round"/></svg>
<svg class="i" style="left:229.50px;top:1027.75px;" width="23" height="20" viewBox="0 0 23 20"><path d="M1.2 3.2 a2.2 2.2 0 0 1 2.2 -2.2 h5 a2 2 0 0 1 1.5 .7 l3 3.1 h6.8 a2.2 2.2 0 0 1 2.2 2.2 v9.3 a2.2 2.2 0 0 1 -2.2 2.2 h-16.3 a2.2 2.2 0 0 1 -2.2 -2.2 z" fill="#43454a" stroke="#ced0d6" stroke-width="1.6" stroke-linejoin="round"/><circle cx="8" cy="11.3" r="2.2" fill="none" stroke="#ced0d6" stroke-width="1.4"/></svg>
<span class="t" style="left:259.10px;top:1024.60px;font-size:20.20px;line-height:26px;color:#dfe1e5;letter-spacing:0.308px;">Enum</span>
<svg class="i" style="left:202.10px;top:1067.70px;" width="10.2" height="15.2" viewBox="0 0 10.2 15.2"><path d="M2 2 L8.2 7.6 L2 13.2" fill="none" stroke="#ced0d6" stroke-width="1.5" stroke-linecap="round" stroke-linejoin="round"/></svg>
<svg class="i" style="left:229.50px;top:1065.25px;" width="23" height="20" viewBox="0 0 23 20"><path d="M1.2 3.2 a2.2 2.2 0 0 1 2.2 -2.2 h5 a2 2 0 0 1 1.5 .7 l3 3.1 h6.8 a2.2 2.2 0 0 1 2.2 2.2 v9.3 a2.2 2.2 0 0 1 -2.2 2.2 h-16.3 a2.2 2.2 0 0 1 -2.2 -2.2 z" fill="#43454a" stroke="#ced0d6" stroke-width="1.6" stroke-linejoin="round"/><circle cx="8" cy="11.3" r="2.2" fill="none" stroke="#ced0d6" stroke-width="1.4"/></svg>
<span class="t" style="left:259.10px;top:1062.10px;font-size:20.20px;line-height:26px;color:#dfe1e5;letter-spacing:0.365px;">Exception</span>
<svg class="i" style="left:202.10px;top:1105.20px;" width="10.2" height="15.2" viewBox="0 0 10.2 15.2"><path d="M2 2 L8.2 7.6 L2 13.2" fill="none" stroke="#ced0d6" stroke-width="1.5" stroke-linecap="round" stroke-linejoin="round"/></svg>
<svg class="i" style="left:229.50px;top:1102.75px;" width="23" height="20" viewBox="0 0 23 20"><path d="M1.2 3.2 a2.2 2.2 0 0 1 2.2 -2.2 h5 a2 2 0 0 1 1.5 .7 l3 3.1 h6.8 a2.2 2.2 0 0 1 2.2 2.2 v9.3 a2.2 2.2 0 0 1 -2.2 2.2 h-16.3 a2.2 2.2 0 0 1 -2.2 -2.2 z" fill="#43454a" stroke="#ced0d6" stroke-width="1.6" stroke-linejoin="round"/><circle cx="8" cy="11.3" r="2.2" fill="none" stroke="#ced0d6" stroke-width="1.4"/></svg>
<span class="t" style="left:259.10px;top:1099.60px;font-size:20.20px;line-height:26px;color:#dfe1e5;letter-spacing:0.360px;">listener</span>
<svg class="i" style="left:202.10px;top:1142.70px;" width="10.2" height="15.2" viewBox="0 0 10.2 15.2"><path d="M2 2 L8.2 7.6 L2 13.2" fill="none" stroke="#ced0d6" stroke-width="1.5" stroke-linecap="round" stroke-linejoin="round"/></svg>
<svg class="i" style="left:229.50px;top:1140.25px;" width="23" height="20" viewBox="0 0 23 20"><path d="M1.2 3.2 a2.2 2.2 0 0 1 2.2 -2.2 h5 a2 2 0 0 1 1.5 .7 l3 3.1 h6.8 a2.2 2.2 0 0 1 2.2 2.2 v9.3 a2.2 2.2 0 0 1 -2.2 2.2 h-16.3 a2.2 2.2 0 0 1 -2.2 -2.2 z" fill="#43454a" stroke="#ced0d6" stroke-width="1.6" stroke-linejoin="round"/><circle cx="8" cy="11.3" r="2.2" fill="none" stroke="#ced0d6" stroke-width="1.4"/></svg>
<span class="t" style="left:259.10px;top:1137.10px;font-size:20.20px;line-height:26px;color:#dfe1e5;letter-spacing:1.085px;">mapper</span>
<svg class="i" style="left:202.10px;top:1180.20px;" width="10.2" height="15.2" viewBox="0 0 10.2 15.2"><path d="M2 2 L8.2 7.6 L2 13.2" fill="none" stroke="#ced0d6" stroke-width="1.5" stroke-linecap="round" stroke-linejoin="round"/></svg>
<svg class="i" style="left:229.50px;top:1177.75px;" width="23" height="20" viewBox="0 0 23 20"><path d="M1.2 3.2 a2.2 2.2 0 0 1 2.2 -2.2 h5 a2 2 0 0 1 1.5 .7 l3 3.1 h6.8 a2.2 2.2 0 0 1 2.2 2.2 v9.3 a2.2 2.2 0 0 1 -2.2 2.2 h-16.3 a2.2 2.2 0 0 1 -2.2 -2.2 z" fill="#43454a" stroke="#ced0d6" stroke-width="1.6" stroke-linejoin="round"/><circle cx="8" cy="11.3" r="2.2" fill="none" stroke="#ced0d6" stroke-width="1.4"/></svg>
<span class="t" style="left:259.10px;top:1174.60px;font-size:20.20px;line-height:26px;color:#dfe1e5;letter-spacing:0.145px;">service</span>
<div class="r" style="left:0.00px;top:1193.00px;width:449.00px;height:13.00px;background:rgba(255,255,255,0.17);"></div>
<div class="r" style="left:519.50px;top:1.00px;width:14.00px;height:272.00px;background:rgba(255,255,255,0.15);"></div>
</div>
<div class="r" style="left:599.00px;top:126.80px;width:1897.50px;height:1.20px;background:#393b40;"></div>
<svg class="i" style="left:619.80px;top:84.70px;" width="22.8" height="22.8" viewBox="0 0 22.8 22.8"><circle cx="11.4" cy="11.4" r="10.1" fill="#25324d" stroke="#548af7" stroke-width="1.6"/><path d="M15.16 8.27 a4.89 4.89 0 1 0 0 6.26" fill="none" stroke="#548af7" stroke-width="1.82"/></svg>
<span class="t" style="left:652.00px;top:84.00px;font-size:20.20px;line-height:26px;color:#dfe1e5;letter-spacing:0.402px;">UserController.java</span>
<svg class="i" style="left:900.10px;top:84.70px;" width="22.8" height="22.8" viewBox="0 0 22.8 22.8"><circle cx="11.4" cy="11.4" r="10.1" fill="#25324d" stroke="#548af7" stroke-width="1.6"/><path d="M15.16 8.27 a4.89 4.89 0 1 0 0 6.26" fill="none" stroke="#548af7" stroke-width="1.82"/></svg>
<span class="t" style="left:931.60px;top:84.00px;font-size:20.20px;line-height:26px;color:#c6c8ce;letter-spacing:0.066px;">User.java</span>
<svg class="i" style="left:1085.20px;top:84.70px;" width="22.8" height="22.8" viewBox="0 0 22.8 22.8"><circle cx="11.4" cy="11.4" r="10.1" fill="#25324d" stroke="#548af7" stroke-width="1.6"/><path d="M14.70 6.60 h-6.2 v9.6 h6.2 M8.50 11.40 h5.2" fill="none" stroke="#548af7" stroke-width="1.5"/></svg>
<span class="t" style="left:1116.90px;top:84.00px;font-size:20.20px;line-height:26px;color:#c6c8ce;letter-spacing:0.284px;">IpAddress.java</span>
<svg class="i" style="left:1324.20px;top:84.70px;" width="22.8" height="22.8" viewBox="0 0 22.8 22.8"><circle cx="11.4" cy="11.4" r="10.1" fill="#25324d" stroke="#548af7" stroke-width="1.6"/><path d="M14.70 6.60 h-6.2 v9.6 h6.2 M8.50 11.40 h5.2" fill="none" stroke="#548af7" stroke-width="1.5"/></svg>
<span class="t" style="left:1355.80px;top:84.00px;font-size:20.20px;line-height:26px;color:#c6c8ce;letter-spacing:0.252px;">Gender.java</span>
<svg class="i" style="left:1536.20px;top:84.70px;" width="22.8" height="22.8" viewBox="0 0 22.8 22.8"><circle cx="11.4" cy="11.4" r="10.1" fill="#25324d" stroke="#548af7" stroke-width="1.6"/><path d="M14.70 6.60 h-6.2 v9.6 h6.2 M8.50 11.40 h5.2" fill="none" stroke="#548af7" stroke-width="1.5"/></svg>
<span class="t" style="left:1569.10px;top:84.00px;font-size:20.20px;line-height:26px;color:#c6c8ce;letter-spacing:0.220px;">Education.java</span>
<svg class="i" style="left:1772.00px;top:84.70px;" width="22.8" height="22.8" viewBox="0 0 22.8 22.8"><circle cx="11.4" cy="11.4" r="10.1" fill="#25324d" stroke="#548af7" stroke-width="1.6"/><path d="M14.70 6.60 h-6.2 v9.6 h6.2 M8.50 11.40 h5.2" fill="none" stroke="#548af7" stroke-width="1.5"/></svg>
<span class="t" style="left:1804.60px;top:84.00px;font-size:20.20px;line-height:26px;color:#c6c8ce;letter-spacing:0.370px;">WxApiType.java</span>
<svg class="i" style="left:2022.30px;top:84.70px;" width="22.8" height="22.8" viewBox="0 0 22.8 22.8"><circle cx="11.4" cy="11.4" r="10.1" fill="#25324d" stroke="#548af7" stroke-width="1.6"/><path d="M15.16 8.27 a4.89 4.89 0 1 0 0 6.26" fill="none" stroke="#548af7" stroke-width="1.82"/></svg>
<span class="t" style="left:2054.30px;top:84.00px;font-size:20.20px;line-height:26px;color:#c6c8ce;letter-spacing:0.442px;">WxLoginUtil.java</span>
<svg class="i" style="left:2280.20px;top:84.70px;" width="22.8" height="22.8" viewBox="0 0 22.8 22.8"><circle cx="11.4" cy="11.4" r="10.1" fill="#25324d" stroke="#548af7" stroke-width="1.6"/><path d="M15.16 8.27 a4.89 4.89 0 1 0 0 6.26" fill="none" stroke="#548af7" stroke-width="1.82"/></svg>
<span class="t" style="left:2311.70px;top:84.00px;font-size:20.20px;line-height:26px;color:#6b9bd6;letter-spacing:-0.276px;">SystemC</span>
<div class="r" style="left:2362px;top:80px;width:40px;height:36px;background:linear-gradient(90deg,rgba(30,31,34,0) 0%,rgba(30,31,34,0.7) 55%,#1e1f22 85%);"></div>
<svg class="i" style="left:850.00px;top:90.00px;" width="13" height="13" viewBox="0 0 13 13"><path d="M1.3 1.3L11.3 11.3M11.3 1.3L1.3 11.3" stroke="#868a91" stroke-width="1.5" fill="none" stroke-linecap="round"/></svg>
<div class="r" style="left:600.00px;top:123.40px;width:281.50px;height:5.60px;background:#3574f0;border-radius:3px;"></div>
<svg class="i" style="left:2414.70px;top:91.50px;" width="17.2" height="11.4" viewBox="0 0 17.2 11.4"><path d="M2 2 L8.6 9.4 L15.2 2" fill="none" stroke="#ced0d6" stroke-width="1.7" stroke-linecap="round" stroke-linejoin="round"/></svg>
<div class="r" style="left:2463.80px;top:87.60px;width:3.40px;height:3.40px;background:#ced0d6;border-radius:50%;"></div>
<div class="r" style="left:2463.80px;top:95.30px;width:3.40px;height:3.40px;background:#ced0d6;border-radius:50%;"></div>
<div class="r" style="left:2463.80px;top:103.00px;width:3.40px;height:3.40px;background:#ced0d6;border-radius:50%;"></div>
<div class="r" style="left:599.00px;top:913.80px;width:1897.50px;height:32.00px;background:#26282e;"></div>
<div class="r" style="left:740.20px;top:128.00px;width:1.10px;height:1208.00px;background:#313438;"></div>
<div class="r" style="left:2062.80px;top:128.00px;width:1.10px;height:1208.00px;background:#2f3135;"></div>
<div class="r" style="left:783.20px;top:783.50px;width:1.10px;height:357.30px;background:#313438;"></div>
<span class="t c m" style="left:624.60px;top:283.14px;font-size:19.00px;line-height:25px;color:#4b5059;letter-spacing:-0.402px;">20</span>
<span class="t c m" style="left:624.60px;top:315.64px;font-size:19.00px;line-height:25px;color:#4b5059;letter-spacing:-0.402px;">21</span>
<span class="t c m" style="left:624.60px;top:348.14px;font-size:19.00px;line-height:25px;color:#4b5059;letter-spacing:-0.402px;">22</span>
<span class="t c m" style="left:624.60px;top:380.64px;font-size:19.00px;line-height:25px;color:#4b5059;letter-spacing:-0.402px;">23</span>
<span class="t c m" style="left:624.60px;top:445.64px;font-size:19.00px;line-height:25px;color:#4b5059;letter-spacing:-0.402px;">24</span>
<span class="t c m" style="left:624.60px;top:478.14px;font-size:19.00px;line-height:25px;color:#4b5059;letter-spacing:-0.402px;">25</span>
<span class="t c m" style="left:624.60px;top:510.64px;font-size:19.00px;line-height:25px;color:#4b5059;letter-spacing:-0.402px;">26</span>
<span class="t c m" style="left:624.60px;top:693.14px;font-size:19.00px;line-height:25px;color:#4b5059;letter-spacing:-0.402px;">33</span>
<span class="t c m" style="left:624.60px;top:725.64px;font-size:19.00px;line-height:25px;color:#4b5059;letter-spacing:-0.402px;">34</span>
<span class="t c m" style="left:624.60px;top:758.14px;font-size:19.00px;line-height:25px;color:#4b5059;letter-spacing:-0.402px;">35</span>
<span class="t c m" style="left:624.60px;top:790.64px;font-size:19.00px;line-height:25px;color:#4b5059;letter-spacing:-0.402px;">36</span>
<span class="t c m" style="left:624.60px;top:823.14px;font-size:19.00px;line-height:25px;color:#4b5059;letter-spacing:-0.402px;">37</span>
<span class="t c m" style="left:624.60px;top:855.64px;font-size:19.00px;line-height:25px;color:#4b5059;letter-spacing:-0.402px;">38</span>
<span class="t c m" style="left:624.60px;top:888.14px;font-size:19.00px;line-height:25px;color:#4b5059;letter-spacing:-0.402px;">39</span>
<span class="t c m" style="left:624.60px;top:920.64px;font-size:19.00px;line-height:25px;color:#a1a3ab;letter-spacing:-0.402px;">40</span>
<span class="t c m" style="left:624.60px;top:953.14px;font-size:19.00px;line-height:25px;color:#4b5059;letter-spacing:-0.402px;">41</span>
<span class="t c m" style="left:624.60px;top:985.64px;font-size:19.00px;line-height:25px;color:#4b5059;letter-spacing:-0.402px;">42</span>
<span class="t c m" style="left:624.60px;top:1018.14px;font-size:19.00px;line-height:25px;color:#4b5059;letter-spacing:-0.402px;">43</span>
<span class="t c m" style="left:624.60px;top:1050.64px;font-size:19.00px;line-height:25px;color:#4b5059;letter-spacing:-0.402px;">44</span>
<span class="t c m" style="left:624.60px;top:1083.14px;font-size:19.00px;line-height:25px;color:#4b5059;letter-spacing:-0.402px;">45</span>
<span class="t c m" style="left:624.60px;top:1115.64px;font-size:19.00px;line-height:25px;color:#4b5059;letter-spacing:-0.402px;">46</span>
<span class="t c m" style="left:624.60px;top:1148.14px;font-size:19.00px;line-height:25px;color:#4b5059;letter-spacing:-0.402px;">47</span>
<span class="t c m" style="left:624.60px;top:1180.64px;font-size:19.00px;line-height:25px;color:#4b5059;letter-spacing:-0.402px;">48</span>
<span class="t c m" style="left:624.60px;top:1213.14px;font-size:19.00px;line-height:25px;color:#4b5059;letter-spacing:-0.402px;">49</span>
<span class="t c m" style="left:624.60px;top:1245.64px;font-size:19.00px;line-height:25px;color:#4b5059;letter-spacing:-0.402px;">50</span>
<div class="r" style="left:743.60px;top:128.00px;width:1.60px;height:111.00px;background:#3a4a40;"></div>
<svg class="cj " style="left:760.60px;top:134.80px" width="101.50" height="26.39" viewBox="0 -20.30 101.50 26.39" fill="#5f826b"><text x="0" y="0" font-size="20.3">前端控制器</text></svg>
<svg class="cj " style="left:763.20px;top:172.70px" width="20.30" height="26.39" viewBox="0 -20.30 20.30 26.39" fill="#5f826b"><text x="0" y="0" font-size="20.3">自</text></svg>
<span class="t" style="left:783.50px;top:172.09px;font-size:20.80px;line-height:27px;color:#5f826b;">:</span>
<span class="t" style="left:814.20px;top:172.09px;font-size:20.80px;line-height:27px;color:#5f826b;letter-spacing:0.890px;">2023/10/13</span>
<svg class="cj " style="left:762.60px;top:204.70px" width="40.60" height="26.39" viewBox="0 -20.30 40.60 26.39" fill="#5f826b"><text x="0" y="0" font-size="20.3">作者</text></svg>
<span class="t" style="left:802.80px;top:204.19px;font-size:20.80px;line-height:27px;color:#5f826b;">:</span>
<span class="t" style="left:814.20px;top:204.19px;font-size:20.80px;line-height:27px;color:#5f826b;letter-spacing:0.068px;">TuNan</span>
<svg class="i" style="left:744.90px;top:255.10px;" width="14" height="14" viewBox="0 0 14 14"><circle cx="7" cy="4.4" r="2.9" fill="#868a91"/><path d="M1.2 12.6 C1.2 9.4 3.8 8.2 7 8.2 C10.2 8.2 12.8 9.4 12.8 12.6 Z" fill="#868a91"/></svg>
<span class="t" style="left:765.80px;top:250.43px;font-size:17.80px;line-height:23px;color:#868a91;letter-spacing:0.087px;">xiahaike</span>
<span class="t c m" style="left:743.00px;top:283.14px;font-size:19.00px;line-height:25px;color:#b3ae60;letter-spacing:-0.402px;">@RestController</span>
<span class="t c m" style="left:743.00px;top:315.64px;font-size:19.00px;line-height:25px;color:#b3ae60;letter-spacing:-0.402px;">@RequestMapping</span>
<span class="t c m" style="left:908.00px;top:315.64px;font-size:19.00px;line-height:25px;color:#bcbec4;letter-spacing:-0.402px;">(</span>
<div class="r" style="left:917.60px;top:316.90px;width:31.20px;height:17.60px;background:#35373c;border-radius:5px;"></div>
<svg class="i" style="left:918.60px;top:317.50px;" width="16.4" height="16.4" viewBox="0 0 16.4 16.4"><circle cx="8.2" cy="8.2" r="7.6" fill="#777b82"/><path d="M3.6 2.6 L7 3.8 L7.4 6.4 L5.2 7.6 L5.6 10 L3.4 10.4 L1.4 8.4 L1.6 5.2 Z M8.6 8.6 L12 8.2 L13.6 10.6 L11.4 14 L9 13 L9.8 11 Z M10 1.6 L13.4 3.6 L12.4 5.8 L10 5 Z" fill="#2b2d30"/></svg>
<svg class="i" style="left:937.20px;top:322.10px;" width="11" height="8" viewBox="0 0 11 8"><path d="M1.4 1.6 L5.5 5.8 L9.6 1.6" fill="none" stroke="#9a9da4" stroke-width="1.5" stroke-linecap="round" stroke-linejoin="round"/></svg>
<span class="t c m" style="left:950.00px;top:315.64px;font-size:19.00px;line-height:25px;color:#6aab73;letter-spacing:-0.402px;">"</span>
<span class="t c m" style="left:961.00px;top:315.64px;font-size:19.00px;line-height:25px;color:#6aab73;letter-spacing:-0.402px;text-decoration:underline;text-decoration-thickness:1.1px;text-underline-offset:3.2px;text-decoration-color:#7f9384;">/gas/user</span>
<span class="t c m" style="left:1060.00px;top:315.64px;font-size:19.00px;line-height:25px;color:#6aab73;letter-spacing:-0.402px;">"</span>
<span class="t c m" style="left:1071.00px;top:315.64px;font-size:19.00px;line-height:25px;color:#bcbec4;letter-spacing:-0.402px;">)</span>
<span class="t c m" style="left:743.00px;top:348.14px;font-size:19.00px;line-height:25px;color:#cf8e6d;letter-spacing:-0.402px;">public </span>
<span class="t c m" style="left:820.00px;top:348.14px;font-size:19.00px;line-height:25px;color:#cf8e6d;letter-spacing:-0.402px;">class </span>
<span class="t c m" style="left:886.00px;top:348.14px;font-size:19.00px;line-height:25px;color:#bcbec4;letter-spacing:-0.402px;">UserController {</span>
<span class="t" style="left:788.00px;top:412.73px;font-size:17.80px;line-height:23px;color:#7f838b;">1</span>
<svg class="cj " style="left:801.40px;top:412.90px" width="53.40" height="23.14" viewBox="0 -17.80 53.40 23.14" fill="#7f838b"><text x="0" y="0" font-size="17.8">个用法</text></svg>
<span class="t c m" style="left:787.00px;top:445.64px;font-size:19.00px;line-height:25px;color:#b3ae60;letter-spacing:-0.402px;">@Resource</span>
<span class="t c m" style="left:787.00px;top:478.14px;font-size:19.00px;line-height:25px;color:#cf8e6d;letter-spacing:-0.402px;">private </span>
<span class="t c m" style="left:875.00px;top:478.14px;font-size:19.00px;line-height:25px;color:#bcbec4;letter-spacing:-0.402px;">UserService </span>
<span class="t c m" style="left:1007.00px;top:478.14px;font-size:19.00px;line-height:25px;color:#c77dbb;letter-spacing:-0.402px;">userService</span>
<span class="t c m" style="left:1128.00px;top:478.14px;font-size:19.00px;line-height:25px;color:#bcbec4;letter-spacing:-0.402px;">;</span>
<div class="r" style="left:787.40px;top:541.00px;width:1.60px;height:108.00px;background:#3a4a40;"></div>
<svg class="cj " style="left:804.00px;top:548.30px" width="142.10" height="26.39" viewBox="0 -20.30 142.10 26.39" fill="#5f826b"><text x="0" y="0" font-size="20.3">微信小程序登录</text></svg>
<svg class="cj " style="left:806.20px;top:583.50px" width="40.60" height="26.39" viewBox="0 -20.30 40.60 26.39" fill="#5f826b"><text x="0" y="0" font-size="20.3">形参</text></svg>
<span class="t" style="left:846.00px;top:582.89px;font-size:20.80px;line-height:27px;color:#5f826b;">:</span>
<span class="t m" style="left:879.00px;top:585.28px;font-size:19.60px;line-height:25px;color:#5f826b;letter-spacing:0.102px;">requestData</span>
<span class="t" style="left:1016.50px;top:582.09px;font-size:20.80px;line-height:27px;color:#5f826b;">–</span>
<svg class="cj " style="left:1034.00px;top:583.50px" width="81.20" height="26.39" viewBox="0 -20.30 81.20 26.39" fill="#5f826b"><text x="0" y="0" font-size="20.3">请求参数</text></svg>
<svg class="cj " style="left:806.20px;top:615.70px" width="60.90" height="26.39" viewBox="0 -20.30 60.90 26.39" fill="#5f826b"><text x="0" y="0" font-size="20.3">返回值</text></svg>
<span class="t" style="left:866.00px;top:615.09px;font-size:20.80px;line-height:27px;color:#5f826b;">:</span>
<span class="t" style="left:878.80px;top:615.09px;font-size:20.80px;line-height:27px;color:#5f826b;letter-spacing:-0.056px;">ReWxUserInfoVO</span>
<svg class="i" style="left:788.40px;top:665.10px;" width="14" height="14" viewBox="0 0 14 14"><circle cx="7" cy="4.4" r="2.9" fill="#868a91"/><path d="M1.2 12.6 C1.2 9.4 3.8 8.2 7 8.2 C10.2 8.2 12.8 9.4 12.8 12.6 Z" fill="#868a91"/></svg>
<span class="t" style="left:809.30px;top:660.43px;font-size:17.80px;line-height:23px;color:#868a91;letter-spacing:0.087px;">xiahaike</span>
<span class="t c m" style="left:787.00px;top:693.14px;font-size:19.00px;line-height:25px;color:#b3ae60;letter-spacing:-0.402px;">@PostMapping</span>
<span class="t c m" style="left:919.00px;top:693.14px;font-size:19.00px;line-height:25px;color:#bcbec4;letter-spacing:-0.402px;">(</span>
<div class="r" style="left:928.60px;top:694.40px;width:31.20px;height:17.60px;background:#35373c;border-radius:5px;"></div>
<svg class="i" style="left:929.60px;top:695.00px;" width="16.4" height="16.4" viewBox="0 0 16.4 16.4"><circle cx="8.2" cy="8.2" r="7.6" fill="#777b82"/><path d="M3.6 2.6 L7 3.8 L7.4 6.4 L5.2 7.6 L5.6 10 L3.4 10.4 L1.4 8.4 L1.6 5.2 Z M8.6 8.6 L12 8.2 L13.6 10.6 L11.4 14 L9 13 L9.8 11 Z M10 1.6 L13.4 3.6 L12.4 5.8 L10 5 Z" fill="#2b2d30"/></svg>
<svg class="i" style="left:948.20px;top:699.60px;" width="11" height="8" viewBox="0 0 11 8"><path d="M1.4 1.6 L5.5 5.8 L9.6 1.6" fill="none" stroke="#9a9da4" stroke-width="1.5" stroke-linecap="round" stroke-linejoin="round"/></svg>
<span class="t c m" style="left:961.00px;top:693.14px;font-size:19.00px;line-height:25px;color:#6aab73;letter-spacing:-0.402px;">"</span>
<span class="t c m" style="left:972.00px;top:693.14px;font-size:19.00px;line-height:25px;color:#6aab73;letter-spacing:-0.402px;text-decoration:underline;text-decoration-thickness:1.1px;text-underline-offset:3.2px;text-decoration-color:#7f9384;">/getUserLoginByApplets</span>
<span class="t c m" style="left:1214.00px;top:693.14px;font-size:19.00px;line-height:25px;color:#6aab73;letter-spacing:-0.402px;">"</span>
<span class="t c m" style="left:1225.00px;top:693.14px;font-size:19.00px;line-height:25px;color:#bcbec4;letter-spacing:-0.402px;">)</span>
<div class="r" style="left:787.00px;top:719.20px;width:121.40px;height:31.60px;background:#393b40;"></div>
<span class="t c m" style="left:787.00px;top:725.64px;font-size:19.00px;line-height:25px;color:#868a91;letter-spacing:-0.402px;">/unchecked/</span>
<span class="t c m" style="left:908.00px;top:725.64px;font-size:19.00px;line-height:25px;color:#bcbec4;letter-spacing:-0.402px;">  </span>
<span class="t c m" style="left:930.00px;top:725.64px;font-size:19.00px;line-height:25px;color:#7a7e85;letter-spacing:-0.402px;">// </span>
<svg class="cj " style="left:963.80px;top:725.20px" width="248.50" height="23.40" viewBox="0 -18.00 248.50 23.40" fill="#7a7e85"><text x="0" y="0" font-size="18" letter-spacing="-0.25" style="font-family:'Liberation Serif','Noto Serif CJK SC',serif;">用于抑制编译器产生警告信息。</text></svg>
<span class="t c m" style="left:787.00px;top:758.14px;font-size:19.00px;line-height:25px;color:#cf8e6d;letter-spacing:-0.402px;">public </span>
<span class="t c m" style="left:864.00px;top:758.14px;font-size:19.00px;line-height:25px;color:#bcbec4;letter-spacing:-0.402px;">ReWxUserInfoVO </span>
<span class="t c m" style="left:1029.00px;top:758.14px;font-size:19.00px;line-height:25px;color:#56a8f5;letter-spacing:-0.402px;">getUserLoginByApplets</span>
<span class="t c m" style="left:1260.00px;top:758.14px;font-size:19.00px;line-height:25px;color:#bcbec4;letter-spacing:-0.402px;">(</span>
<span class="t c m" style="left:1271.00px;top:758.14px;font-size:19.00px;line-height:25px;color:#b3ae60;letter-spacing:-0.402px;">@RequestBody</span>
<span class="t c m" style="left:1403.00px;top:758.14px;font-size:19.00px;line-height:25px;color:#bcbec4;letter-spacing:-0.402px;"> Map&lt;String, Object&gt; requestData) {</span>
<span class="t c m" style="left:831.00px;top:790.64px;font-size:19.00px;line-height:25px;color:#bcbec4;letter-spacing:-0.402px;">String code = (String) requestData.get(</span>
<span class="t c m" style="left:1260.00px;top:790.64px;font-size:19.00px;line-height:25px;color:#6aab73;letter-spacing:-0.402px;">"code"</span>
<span class="t c m" style="left:1326.00px;top:790.64px;font-size:19.00px;line-height:25px;color:#bcbec4;letter-spacing:-0.402px;">);</span>
<span class="t c m" style="left:831.00px;top:823.14px;font-size:19.00px;line-height:25px;color:#bcbec4;letter-spacing:-0.402px;">Map&lt;String, Object&gt; userMap = (Map&lt;String, Object&gt;) requestData.get(</span>
<span class="t c m" style="left:1579.00px;top:823.14px;font-size:19.00px;line-height:25px;color:#6aab73;letter-spacing:-0.402px;">"user"</span>
<span class="t c m" style="left:1645.00px;top:823.14px;font-size:19.00px;line-height:25px;color:#bcbec4;letter-spacing:-0.402px;">);</span>
<span class="t c m" style="left:831.00px;top:855.64px;font-size:19.00px;line-height:25px;color:#bcbec4;letter-spacing:-0.402px;">UserDTO userDTO = </span>
<span class="t c m" style="left:1029.00px;top:855.64px;font-size:19.00px;line-height:25px;color:#cf8e6d;letter-spacing:-0.402px;">new </span>
<span class="t c m" style="left:1073.00px;top:855.64px;font-size:19.00px;line-height:25px;color:#bcbec4;letter-spacing:-0.402px;">UserDTO();</span>
<span class="t c m" style="left:831.00px;top:888.14px;font-size:19.00px;line-height:25px;color:#bcbec4;letter-spacing:-0.402px;">userDTO.setAvatarUrl((String) userMap.get(</span>
<span class="t c m" style="left:1293.00px;top:888.14px;font-size:19.00px;line-height:25px;color:#6aab73;letter-spacing:-0.402px;">"avatarUrl"</span>
<span class="t c m" style="left:1414.00px;top:888.14px;font-size:19.00px;line-height:25px;color:#bcbec4;letter-spacing:-0.402px;">));</span>
<span class="t c m" style="left:831.00px;top:920.64px;font-size:19.00px;line-height:25px;color:#bcbec4;letter-spacing:-0.402px;">userDTO.setCity((String) userMap.get(</span>
<span class="t c m" style="left:1238.00px;top:920.64px;font-size:19.00px;line-height:25px;color:#6aab73;letter-spacing:-0.402px;">"city"</span>
<span class="t c m" style="left:1304.00px;top:920.64px;font-size:19.00px;line-height:25px;color:#bcbec4;letter-spacing:-0.402px;">));</span>
<span class="t c m" style="left:831.00px;top:953.14px;font-size:19.00px;line-height:25px;color:#bcbec4;letter-spacing:-0.402px;">userDTO.setCountry((String) userMap.get(</span>
<span class="t c m" style="left:1271.00px;top:953.14px;font-size:19.00px;line-height:25px;color:#6aab73;letter-spacing:-0.402px;">"country"</span>
<span class="t c m" style="left:1370.00px;top:953.14px;font-size:19.00px;line-height:25px;color:#bcbec4;letter-spacing:-0.402px;">));</span>
<span class="t c m" style="left:831.00px;top:985.64px;font-size:19.00px;line-height:25px;color:#bcbec4;letter-spacing:-0.402px;">userDTO.setGender((Integer) userMap.get(</span>
<span class="t c m" style="left:1271.00px;top:985.64px;font-size:19.00px;line-height:25px;color:#6aab73;letter-spacing:-0.402px;">"gender"</span>
<span class="t c m" style="left:1359.00px;top:985.64px;font-size:19.00px;line-height:25px;color:#bcbec4;letter-spacing:-0.402px;">));</span>
<span class="t c m" style="left:831.00px;top:1018.14px;font-size:19.00px;line-height:25px;color:#bcbec4;letter-spacing:-0.402px;">userDTO.setLanguage((String) userMap.get(</span>
<span class="t c m" style="left:1282.00px;top:1018.14px;font-size:19.00px;line-height:25px;color:#6aab73;letter-spacing:-0.402px;">"language"</span>
<span class="t c m" style="left:1392.00px;top:1018.14px;font-size:19.00px;line-height:25px;color:#bcbec4;letter-spacing:-0.402px;">));</span>
<span class="t c m" style="left:831.00px;top:1050.64px;font-size:19.00px;line-height:25px;color:#bcbec4;letter-spacing:-0.402px;">userDTO.setNickName((String) userMap.get(</span>
<span class="t c m" style="left:1282.00px;top:1050.64px;font-size:19.00px;line-height:25px;color:#6aab73;letter-spacing:-0.402px;">"nickName"</span>
<span class="t c m" style="left:1392.00px;top:1050.64px;font-size:19.00px;line-height:25px;color:#bcbec4;letter-spacing:-0.402px;">));</span>
<span class="t c m" style="left:831.00px;top:1083.14px;font-size:19.00px;line-height:25px;color:#bcbec4;letter-spacing:-0.402px;">System.</span>
<span class="t c m" style="left:908.00px;top:1083.14px;font-size:19.00px;line-height:25px;color:#c77dbb;letter-spacing:-0.402px;font-style:italic;">out</span>
<span class="t c m" style="left:941.00px;top:1083.14px;font-size:19.00px;line-height:25px;color:#bcbec4;letter-spacing:-0.402px;">.println(</span>
<span class="t c m" style="left:1040.00px;top:1083.14px;font-size:19.00px;line-height:25px;color:#6aab73;letter-spacing:-0.402px;">"userDTO = "</span>
<span class="t c m" style="left:1172.00px;top:1083.14px;font-size:19.00px;line-height:25px;color:#bcbec4;letter-spacing:-0.402px;"> + userDTO);</span>
<span class="t c m" style="left:831.00px;top:1115.64px;font-size:19.00px;line-height:25px;color:#cf8e6d;letter-spacing:-0.402px;">return </span>
<span class="t c m" style="left:908.00px;top:1115.64px;font-size:19.00px;line-height:25px;color:#c77dbb;letter-spacing:-0.402px;">userService</span>
<span class="t c m" style="left:1029.00px;top:1115.64px;font-size:19.00px;line-height:25px;color:#bcbec4;letter-spacing:-0.402px;">.loginByWxApplets(code , userDTO);</span>
<span class="t c m" style="left:787.00px;top:1148.14px;font-size:19.00px;line-height:25px;color:#bcbec4;letter-spacing:-0.402px;">}</span>
<span class="t c m" style="left:743.00px;top:1213.14px;font-size:19.00px;line-height:25px;color:#bcbec4;letter-spacing:-0.402px;">}</span>
<div class="r" style="left:1336.60px;top:916.80px;width:2.30px;height:26.60px;background:#ced0d6;"></div>
<svg class="i" style="left:653.20px;top:344.60px;" width="28" height="26" viewBox="0 0 28 26"><circle cx="12.8" cy="12.4" r="10" fill="#253627" stroke="#57965c" stroke-width="1.7"/><path d="M5.9 5.4 L19.9 19.2" stroke="#57965c" stroke-width="1.8" fill="none"/><path d="M25.6 20.8 V25.6 H20.8 Z" fill="#ced0d6"/></svg>
<svg class="i" style="left:653.00px;top:754.50px;" width="28" height="28" viewBox="0 0 28 28"><circle cx="11.8" cy="12" r="9.6" fill="#253627" stroke="#57965c" stroke-width="1.7"/><path d="M5.2 5 L12.5 12.2" stroke="#57965c" stroke-width="1.7" fill="none"/><circle cx="18.2" cy="18.6" r="7.4" fill="#1e1f22"/><circle cx="18.2" cy="18.6" r="5.6" fill="none" stroke="#ced0d6" stroke-width="1.2"/><path d="M12.6 18.6 H23.8 M18.2 13 V24.2 M18.2 13 C15 15.5 15 21.7 18.2 24.2 M18.2 13 C21.4 15.5 21.4 21.7 18.2 24.2" fill="none" stroke="#ced0d6" stroke-width="1"/></svg>
<span class="t" style="left:681.80px;top:751.72px;font-size:23.60px;line-height:31px;color:#d5d7dc;">@</span>
<svg class="i" style="left:2462.00px;top:141.00px;" width="24" height="18" viewBox="0 0 24 18"><path d="M3.2 9.6 L8.4 14.6 L19.6 3.4" fill="none" stroke="#57965c" stroke-width="3"/></svg>
<div class="r" style="left:2481.20px;top:432.30px;width:14.30px;height:836.00px;background:rgba(255,255,255,0.19);"></div>
<svg class="i" style="left:2497.00px;top:64.00px;" width="64" height="64" viewBox="0 0 64 64"><g fill="none" stroke="#ced0d6" stroke-width="2" stroke-linecap="round" stroke-linejoin="round"><path d="M19.6 39.4 C22.6 36.4 22.4 33 22.6 28 C22.8 21.6 26.6 17.4 31.6 17.4 C36.6 17.4 40.4 21.6 40.6 28 C40.8 33 40.6 36.4 43.6 39.4 Z"/><path d="M28.8 43 C29.6 44.6 33.6 44.6 34.4 43"/></g></svg>
<svg class="i" style="left:2497.00px;top:126.00px;" width="64" height="64" viewBox="0 0 64 64"><g fill="none" stroke="#ced0d6" stroke-width="2" stroke-linecap="round" stroke-linejoin="round"><ellipse cx="31.4" cy="21.6" rx="11.6" ry="4.6"/><path d="M19.8 21.6 V38.6 C19.8 44.6 43 44.6 43 38.6 V21.6 M19.8 27.4 C19.8 33.2 43 33.2 43 27.4 M19.8 33 C19.8 38.8 43 38.8 43 33"/></g></svg>
<svg class="i" style="left:2497.00px;top:188.00px;" width="64" height="64" viewBox="0 0 64 64"><g fill="none" stroke="#ced0d6" stroke-width="2.8" stroke-linecap="round" stroke-linejoin="round"><path d="M19.4 40.6 L22.3 24.4 M21.5 29 C23 24.4 30.6 21.4 31.3 27.4 L28.9 40.6 M31 29 C32.6 24.4 42.8 21.2 43.6 27.4 L41.4 40.6"/></g></svg>
<svg class="i" style="left:2512.20px;top:267.30px;" width="32.64" height="28.56" viewBox="0 0 32 28"><ellipse cx="16" cy="18.8" rx="15.2" ry="8.8" fill="#ced0d6"/><rect x="3.7" y="0.4" width="12.6" height="13.8" rx="5.6" fill="#ced0d6"/><rect x="15.7" y="0.4" width="12.6" height="13.8" rx="5.6" fill="#ced0d6"/><rect x="6.9" y="3.3" width="6.5" height="7.4" rx="2.9" fill="#2b2d30"/><rect x="18.6" y="3.3" width="6.5" height="7.4" rx="2.9" fill="#2b2d30"/><path d="M6.9 13.6 H25.1 V20.6 Q16 26.4 6.9 20.6 Z" fill="#2b2d30"/><rect x="11.2" y="16" width="2.6" height="5.6" rx="1.3" fill="#ced0d6"/><rect x="18.2" y="16" width="2.6" height="5.6" rx="1.3" fill="#ced0d6"/></svg>
<svg class="i" style="left:2497.00px;top:312.00px;" width="64" height="64" viewBox="0 0 64 64"><g fill="none" stroke="#ced0d6" stroke-width="1.9" stroke-linecap="round" stroke-linejoin="round"><path d="M22.6 19 H29.4 C37.4 19 43.6 24.6 43.6 32.6 C43.6 40.6 37.4 46.2 29.4 46.2 H24.8 A2.2 2.2 0 0 1 22.6 44 Z M27.6 24.4 H29.6 C34.6 24.4 38.4 27.8 38.4 32.6 C38.4 37.4 34.6 40.8 29.6 40.8 H27.6 Z"/></g></svg>
<svg class="i" style="left:2497.00px;top:375.00px;" width="64" height="64" viewBox="0 0 64 64"><g fill="none" stroke="#ced0d6" stroke-width="1.9" stroke-linecap="round" stroke-linejoin="round"><circle cx="31.8" cy="31.7" r="12.6"/><path d="M19.2 31.7 H44.4 M21 25.2 H42.6 M21 38.2 H42.6 M31.8 19.1 C25.2 24.6 25.2 38.8 31.8 44.3 M31.8 19.1 C38.4 24.6 38.4 38.8 31.8 44.3"/></g></svg>
<svg class="i" style="left:2497.00px;top:437.00px;" width="64" height="64" viewBox="0 0 64 64"><g fill="none" stroke="#ced0d6" stroke-width="1.9" stroke-linecap="round" stroke-linejoin="round"><path d="M19.2 38.4 C17.4 30.6 23.6 27 30.6 26.6 C36.6 26.2 41.6 24.2 44.6 18.8 C47.6 28.6 45.6 43.6 31.6 44.4 C25.6 44.8 21 42.6 19.2 38.4 Z"/><path d="M21 42.6 C26.6 42.4 36.6 39.6 41.6 30.6" stroke-width="1.5"/></g></svg>
<div class="r" style="left:2510.00px;top:510.20px;width:37.00px;height:1.10px;background:#43454a;"></div>
<svg class="i" style="left:2497.00px;top:518.00px;" width="64" height="64" viewBox="0 0 64 64"><g fill="none" stroke="#ced0d6" stroke-width="1.8" stroke-linecap="round" stroke-linejoin="round"><path d="M19.8 17.2 H43.8 M19.8 21.6 H43.8 M44 22 V46.6 H23.4 A3.6 3.6 0 0 1 19.8 43 V20.6 A3.6 3.6 0 0 1 23.4 17"/></g><path d="M26.4 40.8 L31 28.6 H32.8 L37.4 40.8 H35.4 L34.3 37.8 H29.4 L28.3 40.8 Z M30 36.2 H33.7 L31.9 31 Z" fill="#ced0d6"/></svg>
<svg class="i" style="left:2497.00px;top:580.00px;" width="64" height="64" viewBox="0 0 64 64"><g fill="none" stroke="#ced0d6" stroke-width="1.9" stroke-linecap="round" stroke-linejoin="round"><path d="M30.6 20.6 C32 27.6 35.6 31.4 44.2 33 C35.6 34.6 32 38.4 30.6 45.8 C29.2 38.4 25.6 34.6 17 33 C25.6 31.4 29.2 27.6 30.6 20.6 Z"/></g><circle cx="41.2" cy="22.2" r="3.7" fill="#ced0d6"/></svg>
<div class="r" style="left:2456.9px;top:627.9px;width:60.2px;height:60.2px;border-radius:50%;background:linear-gradient(135deg,#7ad5ea 12%,#8fcdec 30%,#b3b5ea 52%,#e6a6d8 72%,#f3a2cf 90%);"></div>
<div class="r" style="left:2462px;top:633px;width:50px;height:50px;border-radius:50%;background:#6b6c6e;overflow:hidden;"><div class="r" style="left:19.1px;top:0;width:14.3px;height:50px;background:#838384;"></div><div class="r" style="left:33.4px;top:0;width:1.2px;height:50px;background:#727375;"></div></div>
<svg class="i" style="left:2467.00px;top:638.00px;" width="40" height="40" viewBox="0 0 40 40"><g fill="none" stroke="#000" stroke-width="5" stroke-linecap="round" stroke-linejoin="round"><path d="M8.2 7.7 L16 10.7"/><path d="M3.9 15.6 L14.4 21.4 L15.2 24"/><path d="M32 8 L20 14"/><path d="M36.4 15.2 L30.4 19.2 L29.8 22"/><path d="M14.4 28 L15.2 36.4"/><path d="M25.2 22.6 L24.6 36.6"/></g></svg>
<svg class="i" style="left:22.00px;top:1353.40px;" width="15" height="15" viewBox="0 0 15 15"><rect x="1.8" y="2.2" width="10.6" height="10.4" rx="2" fill="#25324d" stroke="#548af7" stroke-width="1.6"/></svg>
<span class="t" style="left:41.00px;top:1348.40px;font-size:20.20px;line-height:26px;color:#a8adbd;letter-spacing:0.954px;">Applet</span>
<svg class="i" style="left:118.10px;top:1354.50px;" width="10.2" height="14.4" viewBox="0 0 10.2 14.4"><path d="M2 2 L8.2 7.2 L2 12.4" fill="none" stroke="#a4a7ae" stroke-width="1.5" stroke-linecap="round" stroke-linejoin="round"/></svg>
<svg class="i" style="left:142.00px;top:1353.40px;" width="15" height="15" viewBox="0 0 15 15"><rect x="1.8" y="2.2" width="10.6" height="10.4" rx="2" fill="#25324d" stroke="#548af7" stroke-width="1.6"/></svg>
<span class="t" style="left:161.30px;top:1348.40px;font-size:20.20px;line-height:26px;color:#a8adbd;letter-spacing:0.797px;">gas-applet</span>
<svg class="i" style="left:276.70px;top:1354.50px;" width="10.2" height="14.4" viewBox="0 0 10.2 14.4"><path d="M2 2 L8.2 7.2 L2 12.4" fill="none" stroke="#a4a7ae" stroke-width="1.5" stroke-linecap="round" stroke-linejoin="round"/></svg>
<span class="t" style="left:301.30px;top:1348.40px;font-size:20.20px;line-height:26px;color:#a8adbd;letter-spacing:-0.076px;">src</span>
<svg class="i" style="left:342.20px;top:1354.50px;" width="10.2" height="14.4" viewBox="0 0 10.2 14.4"><path d="M2 2 L8.2 7.2 L2 12.4" fill="none" stroke="#a4a7ae" stroke-width="1.5" stroke-linecap="round" stroke-linejoin="round"/></svg>
<span class="t" style="left:366.40px;top:1348.40px;font-size:20.20px;line-height:26px;color:#a8adbd;letter-spacing:0.679px;">main</span>
<svg class="i" style="left:427.10px;top:1354.50px;" width="10.2" height="14.4" viewBox="0 0 10.2 14.4"><path d="M2 2 L8.2 7.2 L2 12.4" fill="none" stroke="#a4a7ae" stroke-width="1.5" stroke-linecap="round" stroke-linejoin="round"/></svg>
<span class="t" style="left:450.00px;top:1348.40px;font-size:20.20px;line-height:26px;color:#a8adbd;letter-spacing:0.311px;">java</span>
<svg class="i" style="left:503.10px;top:1354.50px;" width="10.2" height="14.4" viewBox="0 0 10.2 14.4"><path d="M2 2 L8.2 7.2 L2 12.4" fill="none" stroke="#a4a7ae" stroke-width="1.5" stroke-linecap="round" stroke-linejoin="round"/></svg>
<span class="t" style="left:527.70px;top:1348.40px;font-size:20.20px;line-height:26px;color:#a8adbd;letter-spacing:1.146px;">com</span>
<svg class="i" style="left:583.10px;top:1354.50px;" width="10.2" height="14.4" viewBox="0 0 10.2 14.4"><path d="M2 2 L8.2 7.2 L2 12.4" fill="none" stroke="#a4a7ae" stroke-width="1.5" stroke-linecap="round" stroke-linejoin="round"/></svg>
<span class="t" style="left:608.70px;top:1348.40px;font-size:20.20px;line-height:26px;color:#a8adbd;letter-spacing:0.743px;">ruoyi</span>
<svg class="i" style="left:670.60px;top:1354.50px;" width="10.2" height="14.4" viewBox="0 0 10.2 14.4"><path d="M2 2 L8.2 7.2 L2 12.4" fill="none" stroke="#a4a7ae" stroke-width="1.5" stroke-linecap="round" stroke-linejoin="round"/></svg>
<span class="t" style="left:695.00px;top:1348.40px;font-size:20.20px;line-height:26px;color:#a8adbd;letter-spacing:0.110px;">gas</span>
<svg class="i" style="left:741.50px;top:1354.50px;" width="10.2" height="14.4" viewBox="0 0 10.2 14.4"><path d="M2 2 L8.2 7.2 L2 12.4" fill="none" stroke="#a4a7ae" stroke-width="1.5" stroke-linecap="round" stroke-linejoin="round"/></svg>
<span class="t" style="left:766.00px;top:1348.40px;font-size:20.20px;line-height:26px;color:#a8adbd;letter-spacing:0.842px;">controller</span>
<svg class="i" style="left:872.10px;top:1354.50px;" width="10.2" height="14.4" viewBox="0 0 10.2 14.4"><path d="M2 2 L8.2 7.2 L2 12.4" fill="none" stroke="#a4a7ae" stroke-width="1.5" stroke-linecap="round" stroke-linejoin="round"/></svg>
<svg class="i" style="left:897.40px;top:1349.40px;" width="22.8" height="22.8" viewBox="0 0 22.8 22.8"><circle cx="11.4" cy="11.4" r="10.1" fill="#25324d" stroke="#548af7" stroke-width="1.6"/><path d="M15.16 8.27 a4.89 4.89 0 1 0 0 6.26" fill="none" stroke="#548af7" stroke-width="1.82"/></svg>
<span class="t" style="left:928.00px;top:1348.40px;font-size:20.20px;line-height:26px;color:#a8adbd;letter-spacing:0.585px;">UserController</span>
<svg class="i" style="left:1080.50px;top:1354.50px;" width="10.2" height="14.4" viewBox="0 0 10.2 14.4"><path d="M2 2 L8.2 7.2 L2 12.4" fill="none" stroke="#a4a7ae" stroke-width="1.5" stroke-linecap="round" stroke-linejoin="round"/></svg>
<svg class="i" style="left:1104.60px;top:1349.00px;" width="23.4" height="23.4" viewBox="0 0 23.4 23.4"><circle cx="11.7" cy="11.7" r="10.4" fill="#402929" stroke="#e05f5f" stroke-width="1.6"/><path d="M6.70 15.30 v-6.6 M6.70 10.90 c0 -4 5 -4 5 0 v4.4 M11.70 10.90 c0 -4 5 -4 5 0 v4.4" fill="none" stroke="#e05f5f" stroke-width="1.6"/></svg>
<span class="t" style="left:1135.30px;top:1348.40px;font-size:20.20px;line-height:26px;color:#a8adbd;letter-spacing:0.543px;">getUserLoginByApplets</span>
<svg class="i" style="left:1997.20px;top:1352.00px;" width="25.92" height="22.68" viewBox="0 0 32 28"><ellipse cx="16" cy="18.8" rx="15.2" ry="8.8" fill="#e4e5e9"/><rect x="3.7" y="0.4" width="12.6" height="13.8" rx="5.6" fill="#e4e5e9"/><rect x="15.7" y="0.4" width="12.6" height="13.8" rx="5.6" fill="#e4e5e9"/><rect x="6.9" y="3.3" width="6.5" height="7.4" rx="2.9" fill="#2b2d30"/><rect x="18.6" y="3.3" width="6.5" height="7.4" rx="2.9" fill="#2b2d30"/><rect x="11.0" y="16.2" width="2.7" height="5.8" rx="1.35" fill="#2b2d30"/><rect x="18.3" y="16.2" width="2.7" height="5.8" rx="1.35" fill="#2b2d30"/></svg>
<span class="t" style="left:2055.00px;top:1350.50px;font-size:20.20px;line-height:26px;color:#a8adbd;letter-spacing:0.290px;">40:55</span>
<span class="t" style="left:2140.60px;top:1350.50px;font-size:20.20px;line-height:26px;color:#a8adbd;letter-spacing:-1.937px;">CRLF</span>
<span class="t" style="left:2221.30px;top:1350.50px;font-size:20.20px;line-height:26px;color:#a8adbd;letter-spacing:-0.325px;">UTF-8</span>
<div class="r" style="left:2311.60px;top:1355.50px;width:10.30px;height:9.00px;background:#f25022;"></div>
<div class="r" style="left:2323.20px;top:1355.50px;width:10.40px;height:9.00px;background:#7fba00;"></div>
<div class="r" style="left:2311.60px;top:1365.60px;width:10.30px;height:9.00px;background:#00a4ef;"></div>
<div class="r" style="left:2323.20px;top:1365.60px;width:10.40px;height:9.00px;background:#ffb900;"></div>
<span class="t" style="left:2367.80px;top:1350.50px;font-size:20.20px;line-height:26px;color:#a8adbd;">4</span>
<svg class="cj " style="left:2385.80px;top:1352.00px" width="59.40" height="25.74" viewBox="0 -19.80 59.40 25.74" fill="#a8adbd"><text x="0" y="0" font-size="19.8">个空格</text></svg>
<svg class="i" style="left:2448.00px;top:1350.00px;" width="24" height="26" viewBox="0 0 24 26"><g fill="none" stroke="#ced0d6" stroke-width="1.6" stroke-linejoin="round" stroke-linecap="round"><path d="M10 22.6 H5.4 A2.4 2.4 0 0 1 3 20.2 V8.4 L8.8 2.8 H15 A2.4 2.4 0 0 1 17.4 5.2 V12"/><path d="M8.8 3 V8.4 H3.2"/><circle cx="15.6" cy="19" r="2"/><path d="M15.6 14.2 V15.6 M15.6 22.4 V23.8 M11.4 16.6 L12.6 17.3 M18.6 20.7 L19.8 21.4 M11.4 21.4 L12.6 20.7 M18.6 17.3 L19.8 16.6" stroke-width="2.2"/></g></svg>
<svg class="i" style="left:2504.00px;top:1350.00px;" width="28" height="28" viewBox="0 0 28 28"><g fill="none" stroke="#ced0d6" stroke-width="1.7" stroke-linecap="round"><rect x="4.6" y="11.8" width="14.6" height="11.4" rx="2.4"/><path d="M11.9 15.6 V19.2"/><path d="M15.4 11.6 V9.6 A4.1 4.1 0 0 1 23.6 9.6 V11.2"/></g></svg>
<span class="t" style="left:2447.20px;top:1366.97px;font-size:12.20px;line-height:16px;color:#e6e6e6;letter-spacing:-0.127px;text-shadow:0 0 1.2px #222;">CSDN @Tunanna</span>
</body></html>
